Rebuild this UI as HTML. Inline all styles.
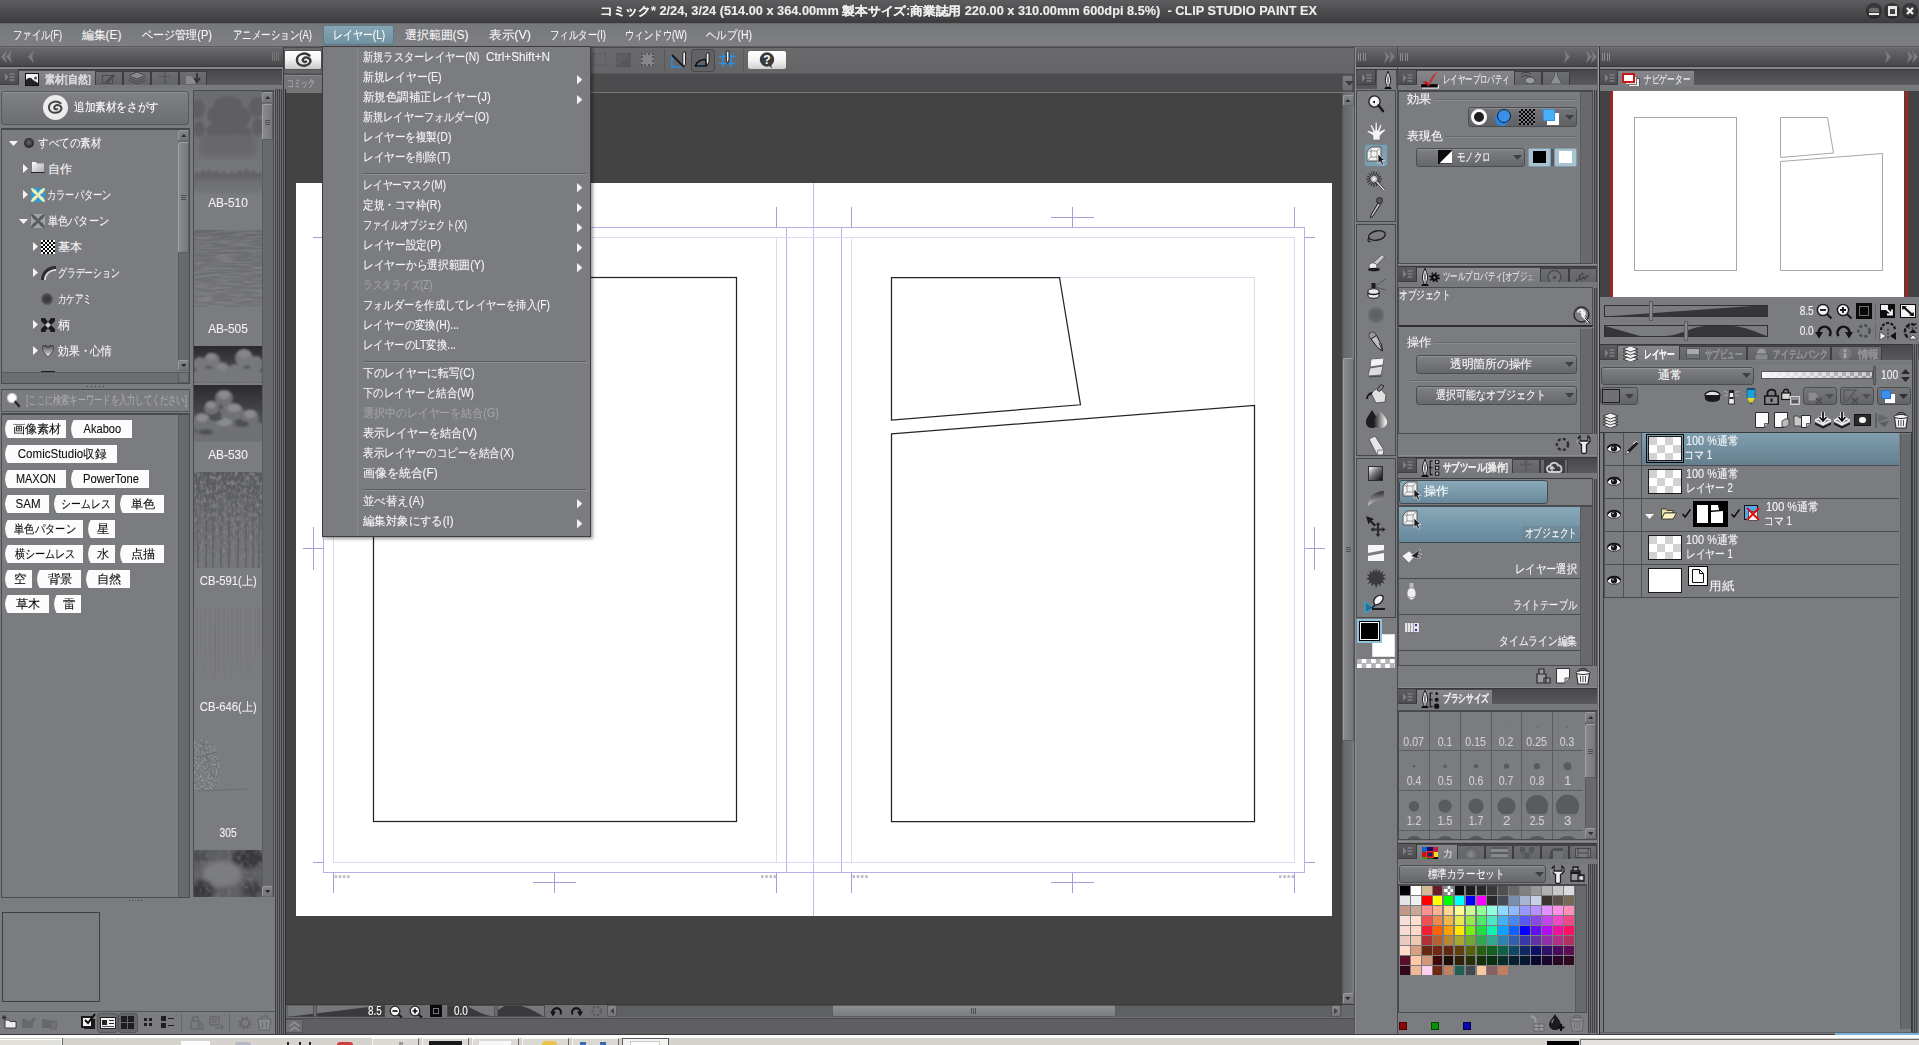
<!DOCTYPE html>
<html lang="ja"><head><meta charset="utf-8"><title>CLIP STUDIO PAINT EX</title><style>
html,body{margin:0;padding:0}
body{width:1919px;height:1045px;overflow:hidden;position:relative;background:#7b7c80;font-family:"Liberation Sans",sans-serif;font-size:12px;color:#f4f4f4}
div{position:absolute;box-sizing:border-box}
.t{white-space:nowrap;overflow:visible;-webkit-text-stroke:0.1px currentColor}
</style></head><body>
<div style="left:0px;top:0px;width:1919px;height:23px;background:linear-gradient(#5d5d60,#3c3c3e);"></div>
<div class="t" style="left:599.5px;top:3px;height:16px;line-height:16px;font-size:12px;color:#eeeeee;font-weight:bold;"><span style="display:inline-block;transform:scaleX(1.0620);transform-origin:0 50%">コミック* 2/24, 3/24 (514.00 x 364.00mm 製本サイズ:商業誌用 220.00 x 310.00mm 600dpi 8.5%)&nbsp; - CLIP STUDIO PAINT EX</span></div>
<div style="left:1866px;top:3px;width:16px;height:16px;background:radial-gradient(circle at 50% 40%,#4a4a4c,#1e1e20);border-radius:8px;"></div>
<div style="left:1884px;top:3px;width:16px;height:16px;background:radial-gradient(circle at 50% 40%,#4a4a4c,#1e1e20);border-radius:8px;"></div>
<div style="left:1902px;top:3px;width:16px;height:16px;background:radial-gradient(circle at 50% 40%,#4a4a4c,#1e1e20);border-radius:8px;"></div>
<div style="left:1869px;top:13px;width:10px;height:2px;background:#e8e8e8;"></div>
<div style="left:1869px;top:8px;width:10px;height:4px;background:#6a6a6c;border-radius:2px 2px 0 0;"></div>
<div style="left:1888px;top:6px;width:9px;height:10px;border:2px solid #e8e8e8;border-top-width:3px;"></div>
<svg style="position:absolute;left:1906px;top:7px;" width="8" height="8" viewBox="0 0 8 8"><path d="M1 1L7 7M7 1L1 7" stroke="#f0f0f0" stroke-width="2.2"/></svg>
<div style="left:0px;top:23px;width:1919px;height:24px;background:linear-gradient(#77787c,#7e7f83);border-top:1px solid #6a6a6d;border-bottom:1px solid #5a5a5d;"></div>
<div class="t" style="left:12.5px;top:27px;height:16px;line-height:16px;font-size:12px;color:#f6f6f6;"><span style="display:inline-block;transform:scaleX(0.7737);transform-origin:0 50%">ファイル(F)</span></div>
<div class="t" style="left:81.5px;top:27px;height:16px;line-height:16px;font-size:12px;color:#f6f6f6;"><span style="display:inline-block;transform:scaleX(1.0000);transform-origin:0 50%">編集(E)</span></div>
<div class="t" style="left:141.5px;top:27px;height:16px;line-height:16px;font-size:12px;color:#f6f6f6;"><span style="display:inline-block;transform:scaleX(0.9211);transform-origin:0 50%">ページ管理(P)</span></div>
<div class="t" style="left:232.5px;top:27px;height:16px;line-height:16px;font-size:12px;color:#f6f6f6;"><span style="display:inline-block;transform:scaleX(0.7900);transform-origin:0 50%">アニメーション(A)</span></div>
<div class="t" style="left:404.5px;top:27px;height:16px;line-height:16px;font-size:12px;color:#f6f6f6;"><span style="display:inline-block;transform:scaleX(1.0000);transform-origin:0 50%">選択範囲(S)</span></div>
<div class="t" style="left:489.0px;top:27px;height:16px;line-height:16px;font-size:12px;color:#f6f6f6;"><span style="display:inline-block;transform:scaleX(1.0500);transform-origin:0 50%">表示(V)</span></div>
<div class="t" style="left:550.0px;top:27px;height:16px;line-height:16px;font-size:12px;color:#f6f6f6;"><span style="display:inline-block;transform:scaleX(0.7851);transform-origin:0 50%">フィルター(I)</span></div>
<div class="t" style="left:625.0px;top:27px;height:16px;line-height:16px;font-size:12px;color:#f6f6f6;"><span style="display:inline-block;transform:scaleX(0.7816);transform-origin:0 50%">ウィンドウ(W)</span></div>
<div class="t" style="left:706.0px;top:27px;height:16px;line-height:16px;font-size:12px;color:#f6f6f6;"><span style="display:inline-block;transform:scaleX(0.8733);transform-origin:0 50%">ヘルプ(H)</span></div>
<div style="left:323px;top:25px;width:71px;height:20px;background:linear-gradient(#86a6b6,#6f909f);border:1px solid #5d7a88;border-radius:2px;"></div>
<div class="t" style="left:332.5px;top:27px;height:16px;line-height:16px;font-size:12px;color:#ffffff;"><span style="display:inline-block;transform:scaleX(0.8297);transform-origin:0 50%">レイヤー(L)</span></div>
<div style="left:284px;top:47px;width:1071px;height:26px;background:linear-gradient(#6a6a6d,#656568);border-top:1px solid #4a4a4c;"></div>
<div style="left:284px;top:50px;width:38px;height:20px;background:linear-gradient(#ffffff 0%,#f4f4f4 45%,#c8c8c8 100%);border:1px solid #555;border-radius:2px;"></div>
<svg style="position:absolute;left:295px;top:52px;" width="18" height="16" viewBox="0 0 18 16"><path d="M14.5 3.5 C9 -1 1.5 3 2 8.5 C2.5 14.5 12 15.5 15 10.5 C17 6.5 11 4 8.5 6.5 C6.5 8.5 9 11 11 9.5" fill="none" stroke="#3a3a3c" stroke-width="2.4" stroke-linecap="round"/></svg>
<div style="left:593px;top:53px;width:13px;height:13px;border:1px dashed #5a5a5d;"></div>
<div style="left:616px;top:53px;width:15px;height:14px;background:#5f5f62;border:1px dashed #58585b;"></div>
<svg style="position:absolute;left:616px;top:53px;" width="15" height="14" viewBox="0 0 15 14"><path d="M0 14 L15 0 L15 14 Z" fill="#58585b"/></svg>
<div style="left:641px;top:53px;width:13px;height:13px;background:#87878a;border:2px dotted #55555a;"></div>
<div style="left:664px;top:49px;width:1px;height:22px;background:#58585b;"></div>
<svg style="position:absolute;left:670px;top:50px;" width="18" height="20" viewBox="0 0 18 20"><path d="M2 17 L2 5 L14 17 Z" fill="none" stroke="#1e90e0" stroke-width="0"/><path d="M2 6 L2 17 L14 17" fill="none" stroke="#2a8fe0" stroke-width="1.6"/><path d="M2 5 L14 17" stroke="#18181a" stroke-width="1.8"/><path d="M14 2 L15.5 2 L15.5 14 L14 17 L12.8 14 L12.8 3 Z" fill="#f0f0f0" stroke="#222" stroke-width="1"/></svg>
<div style="left:691px;top:49px;width:24px;height:23px;background:#626265;border:1px solid #4a4a4d;border-radius:3px;"></div>
<svg style="position:absolute;left:694px;top:51px;" width="18" height="19" viewBox="0 0 18 19"><path d="M2 15 L13 15" stroke="#2a8fe0" stroke-width="1.6"/><path d="M1.5 15 C3 10 6 8.5 12 8.5 L12 15 Z" fill="none" stroke="#101012" stroke-width="1.6"/><path d="M13.5 2 L15 2 L15 11 L13.6 14.5 L12.2 11 L12.2 3 Z" fill="#f0f0f0" stroke="#222" stroke-width="1"/></svg>
<svg style="position:absolute;left:718px;top:50px;" width="18" height="20" viewBox="0 0 18 20"><path d="M1 6.5H17M1 13.5H17M5 3V17M13 3V17" stroke="#2a8fe0" stroke-width="1.5"/><path d="M8.5 1 L11 1 L11 10 L9.7 13.5 L8.3 10 L8.3 1 Z" fill="#f0f0f0" stroke="#222" stroke-width="1"/></svg>
<div style="left:743px;top:49px;width:1px;height:22px;background:#58585b;"></div>
<div style="left:747px;top:50px;width:40px;height:20px;background:linear-gradient(#ffffff 0%,#f4f4f4 50%,#cfcfcf 100%);border:1px solid #666;border-radius:3px;"></div>
<svg style="position:absolute;left:758px;top:52px;" width="18" height="17" viewBox="0 0 18 17"><circle cx="9" cy="7.5" r="7.2" fill="#3a3a3c"/><path d="M10 13 L14 16.5 L13 12 Z" fill="#3a3a3c"/><text x="9" y="12" font-size="12" font-weight="bold" fill="#fff" text-anchor="middle" font-family="Liberation Sans">?</text></svg>
<div style="left:284px;top:73px;width:1071px;height:19px;background:#4c4c4e;border-top:1px solid #5a5a5c;"></div>
<div style="left:284px;top:75px;width:38px;height:17px;background:#757578;border-top:1px solid #88888b;"></div>
<div class="t" style="left:287.0px;top:76px;height:14px;line-height:14px;font-size:11px;color:#b0b0b3;"><span style="display:inline-block;transform:scaleX(0.6364);transform-origin:0 50%">コミック</span></div>
<div style="left:1342px;top:75px;width:11px;height:16px;background:linear-gradient(#7d7e81,#6d6e71);border:1px solid #5a5a5d;border-radius:2px;"></div>
<svg style="position:absolute;left:1344.5px;top:81px;" width="9" height="5" viewBox="0 0 9 5"><path d="M0 0 L9 0 L4.5 5 Z" fill="#3e3e40"/></svg>
<div style="left:284px;top:92px;width:1071px;height:1px;background:#77787b;"></div>
<div style="left:284px;top:93px;width:1071px;height:911px;background:#434343;"></div>
<div style="left:284px;top:93px;width:1px;height:911px;background:#2e2e30;"></div>
<div style="left:296px;top:183px;width:1035.5px;height:733px;background:#ffffff;"></div>
<svg style="position:absolute;left:0px;top:0px;shape-rendering:auto;" width="1400" height="1000" viewBox="0 0 1400 1000"><rect x="813" y="183" width="1" height="733" fill="#c0beee"/><rect x="323" y="227" width="982" height="1" fill="#b4b1e8"/><rect x="323" y="872" width="982" height="1" fill="#b4b1e8"/><rect x="323" y="227" width="1" height="646" fill="#b4b1e8"/><rect x="1304" y="227" width="1" height="646" fill="#b4b1e8"/><rect x="786" y="227" width="1" height="646" fill="#b8b5e6"/><rect x="841" y="227" width="1" height="646" fill="#b8b5e6"/><rect x="333" y="237" width="962" height="1" fill="#dddbf4"/><rect x="333" y="862" width="962" height="1" fill="#dddbf4"/><rect x="333" y="237" width="1" height="626" fill="#dddbf4"/><rect x="1294" y="237" width="1" height="626" fill="#dddbf4"/><rect x="776" y="237" width="1" height="626" fill="#dddbf4"/><rect x="851" y="237" width="1" height="626" fill="#dddbf4"/><rect x="333" y="207" width="1" height="20" fill="#a3a0d8"/><rect x="333" y="873" width="1" height="20" fill="#a3a0d8"/><rect x="776" y="207" width="1" height="20" fill="#a3a0d8"/><rect x="776" y="873" width="1" height="20" fill="#a3a0d8"/><rect x="851" y="207" width="1" height="20" fill="#a3a0d8"/><rect x="851" y="873" width="1" height="20" fill="#a3a0d8"/><rect x="1294" y="207" width="1" height="20" fill="#a3a0d8"/><rect x="1294" y="873" width="1" height="20" fill="#a3a0d8"/><rect x="313" y="237" width="10" height="1" fill="#a3a0d8"/><rect x="1305" y="237" width="10" height="1" fill="#a3a0d8"/><rect x="313" y="862" width="10" height="1" fill="#a3a0d8"/><rect x="1305" y="862" width="10" height="1" fill="#a3a0d8"/><rect x="554" y="207" width="1" height="20" fill="#a3a0d8"/><rect x="533" y="217" width="43" height="1" fill="#a3a0d8"/><rect x="554" y="873" width="1" height="20" fill="#a3a0d8"/><rect x="533" y="882" width="43" height="1" fill="#a3a0d8"/><rect x="1072" y="207" width="1" height="20" fill="#a3a0d8"/><rect x="1051" y="217" width="43" height="1" fill="#a3a0d8"/><rect x="1072" y="873" width="1" height="20" fill="#a3a0d8"/><rect x="1051" y="882" width="43" height="1" fill="#a3a0d8"/><rect x="303" y="548" width="20" height="1" fill="#a3a0d8"/><rect x="313" y="527" width="1" height="43" fill="#a3a0d8"/><rect x="1305" y="548" width="20" height="1" fill="#a3a0d8"/><rect x="1314" y="527" width="1" height="43" fill="#a3a0d8"/><rect x="891" y="277" width="364" height="1" fill="#dddbf4"/><rect x="1254" y="277" width="1" height="129" fill="#dddbf4"/><rect x="334.5" y="875.2" width="2.6" height="2.8" fill="#a8a8ae" opacity="0.75"/><rect x="338.7" y="875.2" width="2.6" height="2.8" fill="#a8a8ae" opacity="0.75"/><rect x="342.9" y="875.2" width="2.6" height="2.8" fill="#a8a8ae" opacity="0.75"/><rect x="347.1" y="875.2" width="2.6" height="2.8" fill="#a8a8ae" opacity="0.75"/><rect x="852.5" y="875.2" width="2.6" height="2.8" fill="#a8a8ae" opacity="0.75"/><rect x="856.7" y="875.2" width="2.6" height="2.8" fill="#a8a8ae" opacity="0.75"/><rect x="860.9" y="875.2" width="2.6" height="2.8" fill="#a8a8ae" opacity="0.75"/><rect x="865.1" y="875.2" width="2.6" height="2.8" fill="#a8a8ae" opacity="0.75"/><rect x="761.0" y="875.2" width="2.6" height="2.8" fill="#a8a8ae" opacity="0.75"/><rect x="765.2" y="875.2" width="2.6" height="2.8" fill="#a8a8ae" opacity="0.75"/><rect x="769.4" y="875.2" width="2.6" height="2.8" fill="#a8a8ae" opacity="0.75"/><rect x="773.6" y="875.2" width="2.6" height="2.8" fill="#a8a8ae" opacity="0.75"/><rect x="1279.0" y="875.2" width="2.6" height="2.8" fill="#a8a8ae" opacity="0.75"/><rect x="1283.2" y="875.2" width="2.6" height="2.8" fill="#a8a8ae" opacity="0.75"/><rect x="1287.4" y="875.2" width="2.6" height="2.8" fill="#a8a8ae" opacity="0.75"/><rect x="1291.6" y="875.2" width="2.6" height="2.8" fill="#a8a8ae" opacity="0.75"/><rect x="373.5" y="277.5" width="363" height="544" fill="none" stroke="#242428" stroke-width="1.25"/><path d="M891.5 277.5 L1059.5 277.5 L1080.5 404.8 L891.5 420 Z" fill="none" stroke="#242428" stroke-width="1.25"/><path d="M891.5 433.8 L1254.5 405.4 L1254.5 821.5 L891.5 821.5 Z" fill="none" stroke="#242428" stroke-width="1.25"/></svg>
<div style="left:1342px;top:93px;width:12px;height:911px;background:linear-gradient(90deg,#58585b,#696a6d 25%,#6e6f72 75%,#7e7f83);"></div>
<div style="left:1342.5px;top:95px;width:11px;height:11px;background:linear-gradient(#838488,#747578);border:1px solid #9a9b9e;border-right-color:#68696c;border-bottom-color:#68696c;border-radius:2px;"></div>
<svg style="position:absolute;left:1345.2px;top:99px;" width="5.6" height="3.2" viewBox="0 0 5.6 3.2"><path d="M0 3.2 L2.8 0 L5.6 3.2 Z" fill="#2e2e31"/></svg>
<div style="left:1342.5px;top:993px;width:11px;height:11px;background:linear-gradient(#838488,#747578);border:1px solid #9a9b9e;border-right-color:#68696c;border-bottom-color:#68696c;border-radius:2px;"></div>
<svg style="position:absolute;left:1345.2px;top:997px;" width="5.6" height="3.2" viewBox="0 0 5.6 3.2"><path d="M0 0 L5.6 0 L2.8 3.2 Z" fill="#2e2e31"/></svg>
<div style="left:1342.5px;top:358px;width:11px;height:383px;background:linear-gradient(90deg,#898a8e,#77787c);border:1px solid #5c5d60;border-left-color:#a0a1a4;border-top-color:#a0a1a4;border-radius:2px;"></div>
<div style="left:1345.5px;top:547px;width:5px;height:1px;background:#4f5053;"></div>
<div style="left:1345.5px;top:549px;width:5px;height:1px;background:#4f5053;"></div>
<div style="left:1345.5px;top:551px;width:5px;height:1px;background:#4f5053;"></div>
<div style="left:284px;top:1004px;width:1071px;height:14px;background:#707174;border-top:1px solid #3a3a3c;"></div>
<svg style="position:absolute;left:287px;top:1005px;" width="98" height="12" viewBox="0 0 98 12"><rect width="98" height="12" fill="#77787b"/><path d="M0 12 L98 0 L98 12 Z" fill="#3a3a3c"/><rect x="0" y="0" width="98" height="12" fill="none" stroke="#4c4c4f" stroke-width="1"/></svg>
<div style="left:313px;top:1005px;width:4px;height:12px;background:#6a6b6e;border:1px solid #515255;"></div>
<div class="t" style="left:359px;top:1004px;height:14px;line-height:14px;font-size:12px;color:#ffffff;width:23px;text-align:right;"><span style="display:inline-block;transform:scaleX(0.8150);transform-origin:100% 50%">8.5</span></div>
<svg style="position:absolute;left:389.0px;top:1005px;" width="14" height="13" viewBox="0 0 14 13"><path d="M9.5 9.5 L13 12.5" stroke="#1a1a1c" stroke-width="2.2"/><circle cx="6" cy="6" r="4.8" fill="#f4f4f4" stroke="#222" stroke-width="1.3"/><path d="M3.5 6H8.5" stroke="#111" stroke-width="1.7"/></svg>
<svg style="position:absolute;left:409.0px;top:1005px;" width="14" height="13" viewBox="0 0 14 13"><path d="M9.5 9.5 L13 12.5" stroke="#1a1a1c" stroke-width="2.2"/><circle cx="6" cy="6" r="4.8" fill="#f4f4f4" stroke="#222" stroke-width="1.3"/><path d="M3.5 6H8.5M6 3.5V8.5" stroke="#111" stroke-width="1.7"/></svg>
<div style="left:430px;top:1005px;width:12px;height:12px;background:#0a0a0a;"></div>
<div style="left:433px;top:1008px;width:6px;height:6px;border:1px solid #77787b;"></div>
<svg style="position:absolute;left:447px;top:1005px;" width="98" height="12" viewBox="0 0 98 12"><rect width="98" height="12" fill="#3a3a3c"/><path d="M19 0 H48 V11.5 C40 11 30 7 19 0Z" fill="#77787b"/><path d="M51 0 H59.5 L51 5Z" fill="#77787b"/><path d="M70 0 H98 V12 C90 8 82 2 70 0Z" fill="#77787b"/><rect x="0.5" y="0.5" width="97" height="11" fill="none" stroke="#4c4c4f"/></svg>
<div style="left:494px;top:1005px;width:4px;height:12px;background:#6a6b6e;border:1px solid #515255;"></div>
<div class="t" style="left:453.5px;top:1004px;height:14px;line-height:14px;font-size:12px;color:#ffffff;"><span style="display:inline-block;transform:scaleX(0.8270);transform-origin:0 50%">0.0</span></div>
<svg style="position:absolute;left:550.0px;top:1005px;" width="13" height="12" viewBox="0 0 13 12"><g transform="translate(6.5 0) scale(1 1) translate(-6.5 0)"><path d="M3 9.5 A4.3 4.3 0 1 1 10.5 9.5" fill="none" stroke="#141414" stroke-width="2.1"/><path d="M0 6.5 L6 6.5 L3 11.5 Z" fill="#141414"/></g></svg>
<svg style="position:absolute;left:569.5px;top:1005px;" width="13" height="12" viewBox="0 0 13 12"><g transform="translate(6.5 0) scale(-1 1) translate(-6.5 0)"><path d="M3 9.5 A4.3 4.3 0 1 1 10.5 9.5" fill="none" stroke="#141414" stroke-width="2.1"/><path d="M0 6.5 L6 6.5 L3 11.5 Z" fill="#141414"/></g></svg>
<svg style="position:absolute;left:590px;top:1005px;" width="13" height="12" viewBox="0 0 13 12"><circle cx="6.5" cy="6" r="4.3" fill="none" stroke="#5a5a5d" stroke-width="2" stroke-dasharray="2.4 1.6"/></svg>
<div style="left:607px;top:1005px;width:735px;height:12px;background:#5f6063;border-top:1px solid #4c4c4f;"></div>
<div style="left:607px;top:1005px;width:10px;height:12px;background:linear-gradient(#88898c,#747578);border:1px solid #58585b;border-radius:2px;"></div>
<svg style="position:absolute;left:610px;top:1008px;" width="4" height="6" viewBox="0 0 4 6"><path d="M4 0 L0 3 L4 6 Z" fill="#444"/></svg>
<div style="left:1331px;top:1005px;width:10px;height:12px;background:linear-gradient(#88898c,#747578);border:1px solid #58585b;border-radius:2px;"></div>
<svg style="position:absolute;left:1334px;top:1008px;" width="4" height="6" viewBox="0 0 4 6"><path d="M0 0 L4 3 L0 6 Z" fill="#444"/></svg>
<div style="left:832px;top:1005px;width:284px;height:12px;background:linear-gradient(#8e8f92,#7a7b7e);border:1px solid #5c5d60;border-radius:2px;"></div>
<div style="left:971px;top:1008px;width:1px;height:6px;background:#4f5053;"></div>
<div style="left:973px;top:1008px;width:1px;height:6px;background:#4f5053;"></div>
<div style="left:975px;top:1008px;width:1px;height:6px;background:#4f5053;"></div>
<div style="left:1342px;top:1005px;width:12px;height:12px;background:#68696c;"></div>
<div style="left:284px;top:1018px;width:1071px;height:16px;background:#5f5f62;border-top:1px solid #4c4c4f;"></div>
<div style="left:285px;top:1019px;width:18px;height:14px;background:#6e6e71;border:1px solid #555558;"></div>
<svg style="position:absolute;left:288px;top:1021px;" width="12" height="10" viewBox="0 0 12 10"><path d="M0 5.5 L6.5 0 L13 5.5 L10.5 5.5 L6.5 2.5 L2.5 5.5Z M0 10.5 L6.5 5 L13 10.5 L10.5 10.5 L6.5 7.5 L2.5 10.5Z" fill="#8e8f92"/></svg>
<div style="left:1354px;top:47px;width:1px;height:987px;background:#505154;"></div>
<div style="left:1355px;top:47px;width:1px;height:987px;background:#8e8f93;"></div>
<div style="left:0px;top:47px;width:283px;height:20px;background:linear-gradient(#69696c,#474749);border-top:1px solid #727275;border-bottom:1px solid #39393b;"></div>
<svg style="position:absolute;left:1px;top:50.4px;" width="11" height="13.4" viewBox="0 0 11 13.4"><path d="M6 0 L0 6.7 L6 13.4 L4.2 6.7 Z" fill="#7a7b7e"/><path d="M11 0 L5 6.7 L11 13.4 L9.2 6.7 Z" fill="#7a7b7e"/></svg>
<svg style="position:absolute;left:28px;top:50.4px;" width="6" height="13.4" viewBox="0 0 6 13.4"><path d="M6 0 L0 6.7 L6 13.4 L4.2 6.7 Z" fill="#7a7b7e"/></svg>
<div style="left:272px;top:52px;width:1px;height:9px;background:#77787b;"></div>
<div style="left:274px;top:52px;width:1px;height:9px;background:#77787b;"></div>
<div style="left:276px;top:52px;width:1px;height:9px;background:#77787b;"></div>
<div style="left:278px;top:52px;width:1px;height:9px;background:#77787b;"></div>
<div style="left:0px;top:67px;width:283px;height:2px;background:#85868a;"></div>
<div style="left:0px;top:69px;width:282px;height:16px;background:linear-gradient(#47474a,#5a5a5d);border-top:1px solid #38383a;"></div>
<div style="left:0px;top:69px;width:19px;height:16px;background:linear-gradient(#5c5c5f,#4e4e51);border-right:1px solid #3c3c3e;border-bottom:1px solid #404043;"></div>
<svg style="position:absolute;left:4.5px;top:72.5px;" width="10" height="8" viewBox="0 0 10 8"><path d="M0 0 L3.4 4 L0 8 Z" fill="#7f8084"/><path d="M4.5 1h5M4.5 4h5M4.5 7h5" stroke="#7f8084" stroke-width="1.4"/></svg>
<div style="left:19px;top:70px;width:76px;height:18px;background:linear-gradient(#86878b,#7b7c80 60%);border-top:1px solid #4a4a4d;"></div>
<div style="left:25px;top:73px;width:14px;height:13px;background:#f2f2f2;border:1px solid #111;"></div>
<svg style="position:absolute;left:26px;top:74px;" width="12" height="11" viewBox="0 0 12 11"><path d="M0 11 L0 6 C3 3 5 3 7 6 L12 9 L12 11Z" fill="#222"/><circle cx="9.5" cy="4" r="1.5" fill="#555"/></svg>
<div class="t" style="left:45.0px;top:72px;height:15px;line-height:15px;font-size:11px;color:#d8d8da;font-weight:bold;"><span style="display:inline-block;transform:scaleX(0.8962);transform-origin:0 50%">素材[自然]</span></div>
<div style="left:95px;top:71px;width:28px;height:14px;background:linear-gradient(#6d6e71,#636467);border:1px solid #3e3e41;border-bottom:none;"></div>
<div style="left:123px;top:71px;width:28px;height:14px;background:linear-gradient(#6d6e71,#636467);border:1px solid #3e3e41;border-bottom:none;"></div>
<div style="left:151px;top:71px;width:28px;height:14px;background:linear-gradient(#6d6e71,#636467);border:1px solid #3e3e41;border-bottom:none;"></div>
<div style="left:179px;top:71px;width:28px;height:14px;background:linear-gradient(#6d6e71,#636467);border:1px solid #3e3e41;border-bottom:none;"></div>
<svg style="position:absolute;left:102px;top:73px;" width="14" height="11" viewBox="0 0 14 11"><rect x="0.5" y="2.5" width="10" height="8" fill="none" stroke="#4c4c4f"/><path d="M3 9 L11 1 L13 3 L5 11Z" fill="#4c4c4f"/></svg>
<svg style="position:absolute;left:129px;top:72px;" width="16" height="12" viewBox="0 0 16 12"><path d="M8 0 L16 3.5 L8 7 L0 3.5Z" fill="#8a8b8e" stroke="#4c4c4f"/><path d="M0 6 L8 9.5 L16 6M0 8.5 L8 12 L16 8.5" fill="none" stroke="#4c4c4f"/></svg>
<svg style="position:absolute;left:159px;top:72px;" width="12" height="12" viewBox="0 0 12 12"><circle cx="6" cy="1.8" r="1.6" fill="#5a5a5d"/><path d="M0 4.5H12M6 3V12" stroke="#5a5a5d" stroke-width="2"/></svg>
<svg style="position:absolute;left:186px;top:73px;" width="15" height="11" viewBox="0 0 15 11"><path d="M0 3 L5 3 L6 4.5 L9 4.5 L9 11 L0 11Z" fill="#88898c"/><path d="M11 0V7M8 5 L11 9 L14 5" stroke="#333" stroke-width="1.8" fill="none"/></svg>
<div style="left:0px;top:86px;width:283px;height:3px;background:#77787c;"></div>
<div style="left:0px;top:89px;width:275px;height:945px;background:#7b7c80;"></div>
<div style="left:1px;top:91px;width:188px;height:34px;background:linear-gradient(#808185,#6d6e72);border:1px solid #56575a;border-radius:3px;box-shadow:inset 0 1px 0 #919296;"></div>
<div style="left:43px;top:95px;width:25px;height:25px;background:#ececec;border-radius:13px;"></div>
<svg style="position:absolute;left:47px;top:100px;" width="17" height="15" viewBox="0 0 17 15"><path d="M13.5 3.3 C8.5 -1 1.5 3 2 8 C2.5 13.5 11 14.5 14 10 C16 6 10.5 3.8 8 6 C6 8 8.5 10.3 10.3 9" fill="none" stroke="#444" stroke-width="2" stroke-linecap="round"/></svg>
<div class="t" style="left:73.5px;top:100px;height:15px;line-height:15px;font-size:12px;color:#ffffff;"><span style="display:inline-block;transform:scaleX(0.8854);transform-origin:0 50%">追加素材をさがす</span></div>
<div style="left:1px;top:128px;width:189px;height:256px;background:#7b7c80;border:1px solid #4b4c4f;border-top:2px solid #48494c;"></div>
<svg style="position:absolute;left:9px;top:141px;" width="9" height="5" viewBox="0 0 9 5"><path d="M0 0 L9 0 L4.5 5Z" fill="#f4f4f4"/></svg>
<div style="left:24px;top:138px;width:10px;height:10px;background:radial-gradient(circle at 50% 45%,#6a6a6c 0,#2c2c2e 60%,#1a1a1c 100%);border-radius:5px;"></div>
<div class="t" style="left:37.5px;top:135px;height:16px;line-height:16px;font-size:12px;color:#f6f6f6;"><span style="display:inline-block;transform:scaleX(0.8750);transform-origin:0 50%">すべての素材</span></div>
<svg style="position:absolute;left:23px;top:164px;" width="5" height="9" viewBox="0 0 5 9"><path d="M0 0 L5 4.5 L0 9Z" fill="#f4f4f4"/></svg>
<svg style="position:absolute;left:31px;top:162px;" width="14" height="11" viewBox="0 0 14 11"><defs><linearGradient id="fg" x1="0" y1="0" x2="1" y2="1"><stop offset="0" stop-color="#fff"/><stop offset="1" stop-color="#aaa"/></linearGradient></defs><path d="M1 0 L5 0 L6 1.5 L13 1.5 L13 10 L1 10Z" fill="url(#fg)"/><path d="M0 10.5H13.5" stroke="#222"/></svg>
<div class="t" style="left:47.5px;top:161px;height:16px;line-height:16px;font-size:12px;color:#f6f6f6;"><span style="display:inline-block;transform:scaleX(1.0000);transform-origin:0 50%">自作</span></div>
<svg style="position:absolute;left:23px;top:190px;" width="5" height="9" viewBox="0 0 5 9"><path d="M0 0 L5 4.5 L0 9Z" fill="#f4f4f4"/></svg>
<svg style="position:absolute;left:31px;top:188px;" width="14" height="14" viewBox="0 0 14 14"><rect width="14" height="14" fill="#2f9bd2"/><path d="M7 7 C5 3 3 1.5 0.8 0.8 C1.5 3 3 5 7 7 C9 3 11 1.5 13.2 0.8 C12.5 3 11 5 7 7 C11 9 12.5 11 13.2 13.2 C11 12.5 9 11 7 7 C5 11 3 12.5 0.8 13.2 C1.5 11 3 9 7 7Z" fill="#f0efb4" stroke="#f0efb4" stroke-width="1.6" stroke-linejoin="round"/></svg>
<div class="t" style="left:47.0px;top:187px;height:16px;line-height:16px;font-size:12px;color:#f6f6f6;"><span style="display:inline-block;transform:scaleX(0.7679);transform-origin:0 50%">カラーパターン</span></div>
<svg style="position:absolute;left:19px;top:219px;" width="9" height="5" viewBox="0 0 9 5"><path d="M0 0 L9 0 L4.5 5Z" fill="#f4f4f4"/></svg>
<svg style="position:absolute;left:31px;top:214px;" width="14" height="14" viewBox="0 0 14 14"><rect width="14" height="14" fill="#a2a3a6"/><path d="M7 7 C5 3 3 1.5 0.8 0.8 C1.5 3 3 5 7 7 C9 3 11 1.5 13.2 0.8 C12.5 3 11 5 7 7 C11 9 12.5 11 13.2 13.2 C11 12.5 9 11 7 7 C5 11 3 12.5 0.8 13.2 C1.5 11 3 9 7 7Z" fill="#5a5b5e" stroke="#5a5b5e" stroke-width="1.6" stroke-linejoin="round"/></svg>
<div class="t" style="left:47.5px;top:213px;height:16px;line-height:16px;font-size:12px;color:#f6f6f6;"><span style="display:inline-block;transform:scaleX(0.8472);transform-origin:0 50%">単色パターン</span></div>
<svg style="position:absolute;left:33px;top:242px;" width="5" height="9" viewBox="0 0 5 9"><path d="M0 0 L5 4.5 L0 9Z" fill="#f4f4f4"/></svg>
<div style="left:41px;top:240px;width:14px;height:14px;background:conic-gradient(#000 25%,#fff 0 50%,#000 0 75%,#fff 0) 0 0/4px 4px;"></div>
<div class="t" style="left:57.5px;top:239px;height:16px;line-height:16px;font-size:12px;color:#f6f6f6;"><span style="display:inline-block;transform:scaleX(1.0000);transform-origin:0 50%">基本</span></div>
<svg style="position:absolute;left:33px;top:268px;" width="5" height="9" viewBox="0 0 5 9"><path d="M0 0 L5 4.5 L0 9Z" fill="#f4f4f4"/></svg>
<svg style="position:absolute;left:41px;top:266px;" width="15" height="14" viewBox="0 0 15 14"><path d="M0 14 C0 6 6 0 15 0 L15 5 C9 5 5 9 5 14Z" fill="#2e2e30"/><path d="M3 14 C3 8 8 3 15 3 L15 5 C9 5 5 9 5 14Z" fill="#d8d8d8"/></svg>
<div class="t" style="left:57.5px;top:265px;height:16px;line-height:16px;font-size:12px;color:#f6f6f6;"><span style="display:inline-block;transform:scaleX(0.7321);transform-origin:0 50%">グラデーション</span></div>
<div style="left:41px;top:293px;width:12px;height:12px;background:radial-gradient(circle,#333 0,#444 45%,rgba(80,80,84,0.5) 70%,transparent 75%);"></div>
<div class="t" style="left:57.5px;top:291px;height:16px;line-height:16px;font-size:12px;color:#f6f6f6;"><span style="display:inline-block;transform:scaleX(0.7083);transform-origin:0 50%">カケアミ</span></div>
<svg style="position:absolute;left:33px;top:320px;" width="5" height="9" viewBox="0 0 5 9"><path d="M0 0 L5 4.5 L0 9Z" fill="#f4f4f4"/></svg>
<svg style="position:absolute;left:41px;top:318px;" width="14" height="14" viewBox="0 0 14 14"><path d="M0 0 L4 0 L7 4 L10 0 L14 0 L14 3 L10 7 L14 11 L14 14 L10 14 L7 10 L4 14 L0 14 L0 11 L4 7 L0 3Z" fill="#1c1c1e"/><path d="M7 4 L10 7 L7 10 L4 7Z" fill="#c8c8c8"/></svg>
<div class="t" style="left:57.5px;top:317px;height:16px;line-height:16px;font-size:12px;color:#f6f6f6;"><span style="display:inline-block;transform:scaleX(1.0250);transform-origin:0 50%">柄</span></div>
<svg style="position:absolute;left:33px;top:346px;" width="5" height="9" viewBox="0 0 5 9"><path d="M0 0 L5 4.5 L0 9Z" fill="#f4f4f4"/></svg>
<svg style="position:absolute;left:41px;top:345px;" width="14" height="12" viewBox="0 0 14 12"><defs><linearGradient id="hg" x1="0" y1="0" x2="0" y2="1"><stop offset="0" stop-color="#4a4a4c"/><stop offset="1" stop-color="#e8e8e8"/></linearGradient></defs><path d="M7 12 C0 6 0 0 3.8 0 C6 0 7 2 7 3 C7 2 8 0 10.2 0 C14 0 14 6 7 12Z" fill="url(#hg)" stroke="#39393b" stroke-width="0.8"/></svg>
<div class="t" style="left:57.5px;top:343px;height:16px;line-height:16px;font-size:12px;color:#f6f6f6;"><span style="display:inline-block;transform:scaleX(0.9000);transform-origin:0 50%">効果・心情</span></div>
<div style="left:41px;top:371px;width:14px;height:1px;background:#1c1c1e;"></div>
<div style="left:178px;top:130px;width:11px;height:241px;background:#68696c;border-left:1px solid #5a5b5e;"></div>
<div style="left:178px;top:130px;width:11px;height:11px;background:linear-gradient(#838488,#747578);border:1px solid #9a9b9e;border-right-color:#68696c;border-bottom-color:#68696c;border-radius:2px;"></div>
<svg style="position:absolute;left:180.7px;top:134px;" width="5.6" height="3.2" viewBox="0 0 5.6 3.2"><path d="M0 3.2 L2.8 0 L5.6 3.2 Z" fill="#2e2e31"/></svg>
<div style="left:178px;top:360px;width:11px;height:11px;background:linear-gradient(#838488,#747578);border:1px solid #9a9b9e;border-right-color:#68696c;border-bottom-color:#68696c;border-radius:2px;"></div>
<svg style="position:absolute;left:180.7px;top:364px;" width="5.6" height="3.2" viewBox="0 0 5.6 3.2"><path d="M0 0 L5.6 0 L2.8 3.2 Z" fill="#2e2e31"/></svg>
<div style="left:178px;top:142px;width:11px;height:111px;background:linear-gradient(90deg,#898a8e,#77787c);border:1px solid #5c5d60;border-left-color:#a0a1a4;border-top-color:#a0a1a4;border-radius:2px;"></div>
<div style="left:181px;top:195px;width:5px;height:1px;background:#4f5053;"></div>
<div style="left:181px;top:197px;width:5px;height:1px;background:#4f5053;"></div>
<div style="left:181px;top:199px;width:5px;height:1px;background:#4f5053;"></div>
<div style="left:2px;top:372px;width:176px;height:11px;background:#6c6d70;border-top:1px solid #58595c;"></div>
<div style="left:178px;top:372px;width:11px;height:11px;background:#727376;border:1px solid #5a5b5e;"></div>
<div style="left:87px;top:386px;width:1px;height:1px;background:#3e3e41;"></div>
<div style="left:91px;top:386px;width:1px;height:1px;background:#3e3e41;"></div>
<div style="left:95px;top:386px;width:1px;height:1px;background:#3e3e41;"></div>
<div style="left:99px;top:386px;width:1px;height:1px;background:#3e3e41;"></div>
<div style="left:103px;top:386px;width:1px;height:1px;background:#3e3e41;"></div>
<div style="left:1px;top:389px;width:189px;height:23px;background:#7b7c80;border:1px solid #55565a;border-top-color:#4a4b4e;"></div>
<svg style="position:absolute;left:6px;top:392px;" width="15" height="16" viewBox="0 0 15 16"><circle cx="6" cy="6" r="4.6" fill="#fdfdfd" stroke="#c9c9c9" stroke-width="1.2"/><path d="M9.5 10 L13 14" stroke="#2a2a2c" stroke-width="2.6" stroke-linecap="round"/></svg>
<div class="t" style="left:26.0px;top:393px;height:15px;line-height:15px;font-size:12px;color:#a9aaae;"><span style="display:inline-block;transform:scaleX(0.6861);transform-origin:0 50%">[ここに検索キーワードを入力してください]</span></div>
<div style="left:1px;top:413px;width:189px;height:485px;background:#7b7c80;border:1px solid #4b4c4f;border-top:2px solid #48494c;"></div>
<div style="left:178px;top:415px;width:11px;height:482px;background:#68696c;border-left:1px solid #5a5b5e;"></div>
<svg style="position:absolute;left:5px;top:420px;" width="61" height="18" viewBox="0 0 61 18"><path d="M2.6 0 H61 V18 H2.6 L0.8 14 L0 9 L0.8 4Z" fill="#fcfcfc"/></svg>
<div class="t" style="left:7px;top:421px;height:16px;line-height:16px;font-size:12px;color:#0c0c0c;width:59px;text-align:center;"><span style="display:inline-block;transform:scaleX(1.0104);transform-origin:50% 50%">画像素材</span></div>
<svg style="position:absolute;left:71px;top:420px;" width="61" height="18" viewBox="0 0 61 18"><path d="M2.6 0 H61 V18 H2.6 L0.8 14 L0 9 L0.8 4Z" fill="#fcfcfc"/></svg>
<div class="t" style="left:73px;top:421px;height:16px;line-height:16px;font-size:12px;color:#0c0c0c;width:59px;text-align:center;"><span style="display:inline-block;transform:scaleX(0.9213);transform-origin:50% 50%">Akaboo</span></div>
<svg style="position:absolute;left:5px;top:445px;" width="112" height="18" viewBox="0 0 112 18"><path d="M2.6 0 H112 V18 H2.6 L0.8 14 L0 9 L0.8 4Z" fill="#fcfcfc"/></svg>
<div class="t" style="left:7px;top:446px;height:16px;line-height:16px;font-size:12px;color:#0c0c0c;width:110px;text-align:center;"><span style="display:inline-block;transform:scaleX(0.9616);transform-origin:50% 50%">ComicStudio収録</span></div>
<svg style="position:absolute;left:5px;top:470px;" width="61" height="18" viewBox="0 0 61 18"><path d="M2.6 0 H61 V18 H2.6 L0.8 14 L0 9 L0.8 4Z" fill="#fcfcfc"/></svg>
<div class="t" style="left:7px;top:471px;height:16px;line-height:16px;font-size:12px;color:#0c0c0c;width:59px;text-align:center;"><span style="display:inline-block;transform:scaleX(0.9088);transform-origin:50% 50%">MAXON</span></div>
<svg style="position:absolute;left:71px;top:470px;" width="78" height="18" viewBox="0 0 78 18"><path d="M2.6 0 H78 V18 H2.6 L0.8 14 L0 9 L0.8 4Z" fill="#fcfcfc"/></svg>
<div class="t" style="left:73px;top:471px;height:16px;line-height:16px;font-size:12px;color:#0c0c0c;width:76px;text-align:center;"><span style="display:inline-block;transform:scaleX(0.9326);transform-origin:50% 50%">PowerTone</span></div>
<svg style="position:absolute;left:5px;top:495px;" width="44" height="18" viewBox="0 0 44 18"><path d="M2.6 0 H44 V18 H2.6 L0.8 14 L0 9 L0.8 4Z" fill="#fcfcfc"/></svg>
<div class="t" style="left:7px;top:496px;height:16px;line-height:16px;font-size:12px;color:#0c0c0c;width:42px;text-align:center;"><span style="display:inline-block;transform:scaleX(0.9610);transform-origin:50% 50%">SAM</span></div>
<svg style="position:absolute;left:54px;top:495px;" width="61" height="18" viewBox="0 0 61 18"><path d="M2.6 0 H61 V18 H2.6 L0.8 14 L0 9 L0.8 4Z" fill="#fcfcfc"/></svg>
<div class="t" style="left:56px;top:496px;height:16px;line-height:16px;font-size:12px;color:#0c0c0c;width:59px;text-align:center;"><span style="display:inline-block;transform:scaleX(0.8167);transform-origin:50% 50%">シームレス</span></div>
<svg style="position:absolute;left:120px;top:495px;" width="44" height="18" viewBox="0 0 44 18"><path d="M2.6 0 H44 V18 H2.6 L0.8 14 L0 9 L0.8 4Z" fill="#fcfcfc"/></svg>
<div class="t" style="left:122px;top:496px;height:16px;line-height:16px;font-size:12px;color:#0c0c0c;width:42px;text-align:center;"><span style="display:inline-block;transform:scaleX(1.0125);transform-origin:50% 50%">単色</span></div>
<svg style="position:absolute;left:5px;top:520px;" width="78" height="18" viewBox="0 0 78 18"><path d="M2.6 0 H78 V18 H2.6 L0.8 14 L0 9 L0.8 4Z" fill="#fcfcfc"/></svg>
<div class="t" style="left:7px;top:521px;height:16px;line-height:16px;font-size:12px;color:#0c0c0c;width:76px;text-align:center;"><span style="display:inline-block;transform:scaleX(0.8542);transform-origin:50% 50%">単色パターン</span></div>
<svg style="position:absolute;left:88px;top:520px;" width="27" height="18" viewBox="0 0 27 18"><path d="M2.6 0 H27 V18 H2.6 L0.8 14 L0 9 L0.8 4Z" fill="#fcfcfc"/></svg>
<div class="t" style="left:90px;top:521px;height:16px;line-height:16px;font-size:12px;color:#0c0c0c;width:25px;text-align:center;"><span style="display:inline-block;transform:scaleX(1.0250);transform-origin:50% 50%">星</span></div>
<svg style="position:absolute;left:5px;top:545px;" width="78" height="18" viewBox="0 0 78 18"><path d="M2.6 0 H78 V18 H2.6 L0.8 14 L0 9 L0.8 4Z" fill="#fcfcfc"/></svg>
<div class="t" style="left:7px;top:546px;height:16px;line-height:16px;font-size:12px;color:#0c0c0c;width:76px;text-align:center;"><span style="display:inline-block;transform:scaleX(0.8472);transform-origin:50% 50%">横シームレス</span></div>
<svg style="position:absolute;left:88px;top:545px;" width="27" height="18" viewBox="0 0 27 18"><path d="M2.6 0 H27 V18 H2.6 L0.8 14 L0 9 L0.8 4Z" fill="#fcfcfc"/></svg>
<div class="t" style="left:90px;top:546px;height:16px;line-height:16px;font-size:12px;color:#0c0c0c;width:25px;text-align:center;"><span style="display:inline-block;transform:scaleX(1.0250);transform-origin:50% 50%">水</span></div>
<svg style="position:absolute;left:120px;top:545px;" width="44" height="18" viewBox="0 0 44 18"><path d="M2.6 0 H44 V18 H2.6 L0.8 14 L0 9 L0.8 4Z" fill="#fcfcfc"/></svg>
<div class="t" style="left:122px;top:546px;height:16px;line-height:16px;font-size:12px;color:#0c0c0c;width:42px;text-align:center;"><span style="display:inline-block;transform:scaleX(1.0208);transform-origin:50% 50%">点描</span></div>
<svg style="position:absolute;left:5px;top:570px;" width="27" height="18" viewBox="0 0 27 18"><path d="M2.6 0 H27 V18 H2.6 L0.8 14 L0 9 L0.8 4Z" fill="#fcfcfc"/></svg>
<div class="t" style="left:7px;top:571px;height:16px;line-height:16px;font-size:12px;color:#0c0c0c;width:25px;text-align:center;"><span style="display:inline-block;transform:scaleX(1.0250);transform-origin:50% 50%">空</span></div>
<svg style="position:absolute;left:37px;top:570px;" width="44" height="18" viewBox="0 0 44 18"><path d="M2.6 0 H44 V18 H2.6 L0.8 14 L0 9 L0.8 4Z" fill="#fcfcfc"/></svg>
<div class="t" style="left:39px;top:571px;height:16px;line-height:16px;font-size:12px;color:#0c0c0c;width:42px;text-align:center;"><span style="display:inline-block;transform:scaleX(1.0292);transform-origin:50% 50%">背景</span></div>
<svg style="position:absolute;left:86px;top:570px;" width="44" height="18" viewBox="0 0 44 18"><path d="M2.6 0 H44 V18 H2.6 L0.8 14 L0 9 L0.8 4Z" fill="#fcfcfc"/></svg>
<div class="t" style="left:88px;top:571px;height:16px;line-height:16px;font-size:12px;color:#0c0c0c;width:42px;text-align:center;"><span style="display:inline-block;transform:scaleX(1.0292);transform-origin:50% 50%">自然</span></div>
<svg style="position:absolute;left:5px;top:595px;" width="44" height="18" viewBox="0 0 44 18"><path d="M2.6 0 H44 V18 H2.6 L0.8 14 L0 9 L0.8 4Z" fill="#fcfcfc"/></svg>
<div class="t" style="left:7px;top:596px;height:16px;line-height:16px;font-size:12px;color:#0c0c0c;width:42px;text-align:center;"><span style="display:inline-block;transform:scaleX(1.0208);transform-origin:50% 50%">草木</span></div>
<svg style="position:absolute;left:54px;top:595px;" width="27" height="18" viewBox="0 0 27 18"><path d="M2.6 0 H27 V18 H2.6 L0.8 14 L0 9 L0.8 4Z" fill="#fcfcfc"/></svg>
<div class="t" style="left:56px;top:596px;height:16px;line-height:16px;font-size:12px;color:#0c0c0c;width:25px;text-align:center;"><span style="display:inline-block;transform:scaleX(1.0250);transform-origin:50% 50%">雷</span></div>
<div style="left:129px;top:900px;width:1px;height:1px;background:#3e3e41;"></div>
<div style="left:132px;top:900px;width:1px;height:1px;background:#3e3e41;"></div>
<div style="left:135px;top:900px;width:1px;height:1px;background:#3e3e41;"></div>
<div style="left:138px;top:900px;width:1px;height:1px;background:#3e3e41;"></div>
<div style="left:141px;top:900px;width:1px;height:1px;background:#3e3e41;"></div>
<div style="left:2px;top:912px;width:98px;height:90px;background:#7b7c80;border:1px solid #3e3f42;"></div>
<div style="left:0px;top:1011px;width:275px;height:1px;background:#525356;"></div>
<svg style="position:absolute;left:2px;top:1015px;" width="15" height="14" viewBox="0 0 15 14"><path d="M3 5 L7 5 L8 6.5 L14 6.5 L14 13 L3 13Z" fill="#ececec" stroke="#222" stroke-width="0.8"/><path d="M2 0V5M0 2.5H4.5M0.5 0.8L3.8 4.2M3.8 0.8L0.5 4.2" stroke="#222" stroke-width="0.8"/></svg>
<svg style="position:absolute;left:22px;top:1016px;" width="15" height="13" viewBox="0 0 15 13"><path d="M0 3 L4 3 L5 4.5 L11 4.5 L11 12 L0 12Z" fill="#67686b"/><path d="M6 8 L12 1 L14 3 L8 10Z" fill="#67686b" stroke="#6f7073" stroke-width="0.5"/></svg>
<svg style="position:absolute;left:42px;top:1016px;" width="16" height="14" viewBox="0 0 16 14"><path d="M0 3 L4 3 L5 4.5 L10 4.5 L10 12 L0 12Z" fill="#67686b"/><path d="M8 6 H15 L14 14 H9Z M7.5 5H15.5" fill="#707174" stroke="#67686b"/></svg>
<div style="left:81px;top:1016px;width:12px;height:12px;background:#f4f4f4;border:2px solid #1a1a1c;"></div>
<div style="left:84px;top:1027px;width:11px;height:2px;background:#1a1a1c;"></div>
<div style="left:93px;top:1019px;width:2px;height:10px;background:#1a1a1c;"></div>
<svg style="position:absolute;left:83px;top:1013px;" width="13" height="13" viewBox="0 0 13 13"><path d="M2 7 L5 10 L12 1" fill="none" stroke="#0c0c0e" stroke-width="2"/></svg>
<div style="left:97px;top:1013px;width:21px;height:20px;background:#6b6c6f;border:1px solid #56575a;border-radius:3px;"></div>
<div style="left:100px;top:1017px;width:16px;height:12px;background:#f0f0f0;border:1px solid #222;"></div>
<div style="left:102px;top:1020px;width:5px;height:5px;background:#222;"></div>
<div style="left:109px;top:1020px;width:5px;height:1px;background:#222;"></div>
<div style="left:109px;top:1023px;width:5px;height:1px;background:#222;"></div>
<div style="left:102px;top:1026px;width:12px;height:1px;background:#555;"></div>
<div style="left:118px;top:1013px;width:20px;height:20px;background:#66676a;border:1px solid #56575a;border-radius:3px;"></div>
<div style="left:121px;top:1016px;width:6px;height:6px;background:#1e1e20;"></div>
<div style="left:121px;top:1023px;width:6px;height:6px;background:#1e1e20;"></div>
<div style="left:128px;top:1016px;width:6px;height:6px;background:#1e1e20;"></div>
<div style="left:128px;top:1023px;width:6px;height:6px;background:#1e1e20;"></div>
<div style="left:144px;top:1018px;width:3px;height:3px;background:#1e1e20;"></div>
<div style="left:144px;top:1023px;width:3px;height:3px;background:#1e1e20;"></div>
<div style="left:149px;top:1018px;width:3px;height:3px;background:#1e1e20;"></div>
<div style="left:149px;top:1023px;width:3px;height:3px;background:#1e1e20;"></div>
<div style="left:161px;top:1016px;width:5px;height:5px;background:#1e1e20;"></div>
<div style="left:168px;top:1018px;width:6px;height:1px;background:#1e1e20;"></div>
<div style="left:161px;top:1023px;width:5px;height:5px;background:#1e1e20;"></div>
<div style="left:168px;top:1025px;width:6px;height:1px;background:#1e1e20;"></div>
<div style="left:181px;top:1014px;width:1px;height:19px;background:#66676a;"></div>
<svg style="position:absolute;left:189px;top:1015px;" width="15" height="15" viewBox="0 0 15 15"><path d="M4 2 H9 V6 H4Z M2 6 H11 V14 H2Z M9 9H14V14H9Z" fill="none" stroke="#67686b" stroke-width="1.3"/></svg>
<svg style="position:absolute;left:209px;top:1016px;" width="15" height="14" viewBox="0 0 15 14"><path d="M1 1 H10 V9 H1Z M3 3.5H8M3 6H8" fill="none" stroke="#67686b" stroke-width="1.3"/><path d="M6 11 H12 V8 L15 11.5 L12 14 V12.5 H6Z" fill="#67686b"/></svg>
<div style="left:229px;top:1014px;width:1px;height:19px;background:#66676a;"></div>
<svg style="position:absolute;left:237px;top:1015px;" width="16" height="16" viewBox="0 0 16 16"><circle cx="8" cy="8" r="5" fill="none" stroke="#67686b" stroke-width="3" stroke-dasharray="2.2 1.7"/><circle cx="8" cy="8" r="3.8" fill="none" stroke="#67686b" stroke-width="1.5"/></svg>
<svg style="position:absolute;left:257px;top:1015px;" width="15" height="16" viewBox="0 0 15 16"><path d="M1 4 H14 L12.5 15 H2.5Z" fill="#88898c" stroke="#67686b" stroke-width="1.2"/><path d="M4 3.5 C4 0 11 0 11 3.5" fill="none" stroke="#67686b" stroke-width="1.3"/><path d="M5.5 7V13M9.5 7V13" stroke="#67686b"/></svg>
<div style="left:193px;top:90px;width:81px;height:807px;background:#4a4b4e;"></div>
<div style="left:194px;top:91px;width:68px;height:806px;background:#7b7c80;"></div>
<svg style="position:absolute;left:194px;top:91px;" width="68" height="125" viewBox="0 0 68 125"><defs><linearGradient id="f1" x1="0" y1="0" x2="0" y2="1"><stop offset="0" stop-color="#6b6c70"/><stop offset="0.55" stop-color="#737478"/><stop offset="0.82" stop-color="#7b7c80"/></linearGradient><filter id="b1"><feGaussianBlur stdDeviation="1.1"/></filter><filter id="b2"><feGaussianBlur stdDeviation="3"/></filter></defs><rect width="68" height="125" fill="url(#f1)"/><g filter="url(#b1)" fill="#5e5f63"><ellipse cx="34" cy="14" rx="14" ry="9"/><ellipse cx="24" cy="24" rx="11" ry="10"/><ellipse cx="44" cy="26" rx="13" ry="11"/><ellipse cx="33" cy="36" rx="16" ry="10"/><ellipse cx="20" cy="40" rx="8" ry="7"/><ellipse cx="50" cy="42" rx="8" ry="7"/><ellipse cx="4" cy="18" rx="7" ry="10"/><ellipse cx="5" cy="38" rx="6" ry="8"/><ellipse cx="63" cy="16" rx="8" ry="10"/><ellipse cx="64" cy="36" rx="6" ry="9"/></g><g filter="url(#b2)" fill="#67686c"><rect x="6" y="44" width="56" height="22"/></g><path d="M0 84 L3 80 L6 83 L9 78 L12 82 L15 77 L18 82 L22 79 L26 83 L30 80 L34 84 L38 80 L42 83 L45 78 L49 82 L52 77 L56 82 L60 79 L64 83 L68 80 V96 H0Z" fill="#626367" filter="url(#b1)"/><rect y="88" width="68" height="14" fill="#717276" filter="url(#b2)"/></svg>
<div class="t" style="left:194px;top:195.6px;height:15px;line-height:15px;font-size:12px;color:#f0f0f0;width:68px;text-align:center;"><span style="display:inline-block;transform:scaleX(0.9917);transform-origin:50% 50%">AB-510</span></div>
<svg style="position:absolute;left:194px;top:230px;" width="68" height="77" viewBox="0 0 68 77"><defs><linearGradient id="s1" x1="0" y1="0" x2="0" y2="1"><stop offset="0" stop-color="#66676b"/><stop offset="0.1" stop-color="#6b6c70"/><stop offset="1" stop-color="#717276"/></linearGradient><filter id="sw" x="0" y="0" width="100%" height="100%"><feTurbulence type="fractalNoise" baseFrequency="0.05 0.45" numOctaves="2" seed="4"/><feColorMatrix values="0 0 0 0 0.36  0 0 0 0 0.365  0 0 0 0 0.38  0 0 0 1.6 -0.62"/></filter></defs><rect width="68" height="77" fill="url(#s1)"/><rect width="68" height="77" filter="url(#sw)" opacity="0.55"/></svg>
<div class="t" style="left:194px;top:321.6px;height:15px;line-height:15px;font-size:12px;color:#f0f0f0;width:68px;text-align:center;"><span style="display:inline-block;transform:scaleX(0.9917);transform-origin:50% 50%">AB-505</span></div>
<svg style="position:absolute;left:194px;top:346px;" width="68" height="96" viewBox="0 0 68 96"><defs><linearGradient id="c1" x1="0" y1="0" x2="0" y2="1"><stop offset="0" stop-color="#2a2a2e"/><stop offset="1" stop-color="#5a5b5f"/></linearGradient><linearGradient id="c2" x1="0" y1="0" x2="0" y2="1"><stop offset="0" stop-color="#2c2c30"/><stop offset="0.6" stop-color="#4c4d51"/><stop offset="1" stop-color="#77787c"/></linearGradient><filter id="cb"><feGaussianBlur stdDeviation="0.9"/></filter></defs><rect width="68" height="37" fill="url(#c1)"/><g filter="url(#cb)" fill="#77787c"><ellipse cx="6" cy="18" rx="7" ry="7"/><ellipse cx="18" cy="14" rx="8" ry="7"/><ellipse cx="27" cy="24" rx="9" ry="8"/><ellipse cx="12" cy="30" rx="14" ry="8"/><ellipse cx="50" cy="12" rx="9" ry="9"/><ellipse cx="62" cy="18" rx="7" ry="8"/><ellipse cx="42" cy="26" rx="9" ry="8"/><ellipse cx="56" cy="30" rx="13" ry="8"/><rect x="0" y="30" width="68" height="7"/></g><g fill="#85868a" filter="url(#cb)"><ellipse cx="17" cy="11" rx="5" ry="3.5"/><ellipse cx="50" cy="8" rx="6" ry="4"/><ellipse cx="28" cy="21" rx="5" ry="3"/></g><rect y="37" width="68" height="2" fill="#7b7c80"/><rect y="39" width="68" height="57" fill="url(#c2)"/><g filter="url(#cb)" fill="#707175"><ellipse cx="30" cy="52" rx="9" ry="8"/><ellipse cx="18" cy="62" rx="8" ry="7"/><ellipse cx="38" cy="66" rx="12" ry="9"/><ellipse cx="8" cy="76" rx="10" ry="9"/><ellipse cx="28" cy="80" rx="14" ry="10"/><ellipse cx="56" cy="72" rx="9" ry="8"/><ellipse cx="62" cy="84" rx="9" ry="8"/><ellipse cx="46" cy="86" rx="12" ry="8"/><rect x="0" y="88" width="68" height="8"/></g><g filter="url(#cb)" fill="#8a8b8f"><ellipse cx="30" cy="49" rx="6" ry="4"/><ellipse cx="17" cy="59" rx="5" ry="3.5"/><ellipse cx="40" cy="62" rx="7" ry="4"/><ellipse cx="8" cy="72" rx="6" ry="4"/><ellipse cx="56" cy="68" rx="6" ry="4"/><ellipse cx="30" cy="76" rx="8" ry="4"/></g><g filter="url(#cb)" fill="#4e4f53"><ellipse cx="22" cy="72" rx="6" ry="3"/><ellipse cx="48" cy="78" rx="7" ry="3"/><ellipse cx="12" cy="86" rx="7" ry="2.5"/></g></svg>
<div class="t" style="left:194px;top:447.6px;height:15px;line-height:15px;font-size:12px;color:#f0f0f0;width:68px;text-align:center;"><span style="display:inline-block;transform:scaleX(0.9917);transform-origin:50% 50%">AB-530</span></div>
<svg style="position:absolute;left:194px;top:472px;" width="68" height="96" viewBox="0 0 68 96"><defs><linearGradient id="bm" x1="0" y1="0" x2="0" y2="1"><stop offset="0" stop-color="#58595d"/><stop offset="0.45" stop-color="#66676b"/><stop offset="1" stop-color="#747579"/></linearGradient><filter id="bn" x="0" y="0" width="100%" height="100%"><feTurbulence type="fractalNoise" baseFrequency="0.32 0.22" numOctaves="2" seed="7"/><feColorMatrix values="0 0 0 0 0.3  0 0 0 0 0.305  0 0 0 0 0.32  0 0 0 2.4 -1.05"/></filter><linearGradient id="bf" x1="0" y1="0" x2="0" y2="1"><stop offset="0" stop-color="#fff"/><stop offset="0.75" stop-color="#fff" stop-opacity="0.55"/><stop offset="1" stop-color="#fff" stop-opacity="0.25"/></linearGradient><mask id="bk"><rect width="68" height="96" fill="url(#bf)"/></mask></defs><rect width="68" height="96" fill="url(#bm)"/><g stroke="#5d5e62" stroke-width="1.6" opacity="0.8"><path d="M4 0V96M12 0V96M19 0V96M27 0V96M35 0V96M44 0V96M52 0V96M59 0V96M65 0V96"/></g><g stroke="#7c7d81" stroke-width="1" opacity="0.7"><path d="M8 20V96M23 30V96M31 20V96M40 36V96M48 26V96M56 40V96"/></g><rect width="68" height="96" filter="url(#bn)" mask="url(#bk)" opacity="0.85"/></svg>
<div class="t" style="left:194px;top:573.6px;height:15px;line-height:15px;font-size:12px;color:#f0f0f0;width:68px;text-align:center;"><span style="display:inline-block;transform:scaleX(0.9392);transform-origin:50% 50%">CB-591(上)</span></div>
<svg style="position:absolute;left:194px;top:607px;" width="68" height="82" viewBox="0 0 68 82"><defs><linearGradient id="rf" x1="0" y1="0" x2="0" y2="1"><stop offset="0" stop-color="#fff" stop-opacity="0.9"/><stop offset="0.6" stop-color="#fff" stop-opacity="0.6"/><stop offset="1" stop-color="#fff" stop-opacity="0"/></linearGradient><mask id="rk"><rect width="68" height="82" fill="url(#rf)"/></mask></defs><g mask="url(#rk)" stroke="#727377" stroke-width="1"><path d="M3 0V70M7 4V50M11 0V76M16 0V60M21 2V80M25 0V66M30 0V74M34 6V58M38 0V78M43 0V62M47 3V72M52 0V68M56 0V80M61 0V56M65 0V74"/></g><g mask="url(#rk)" stroke="#6d6e72" stroke-width="1"><path d="M21 20V66M22 30V60"/></g></svg>
<div class="t" style="left:194px;top:699.6px;height:15px;line-height:15px;font-size:12px;color:#f0f0f0;width:68px;text-align:center;"><span style="display:inline-block;transform:scaleX(0.9392);transform-origin:50% 50%">CB-646(上)</span></div>
<svg style="position:absolute;left:194px;top:738px;" width="68" height="58" viewBox="0 0 68 58"><defs><filter id="tn" x="0" y="0" width="100%" height="100%"><feTurbulence type="fractalNoise" baseFrequency="0.5" numOctaves="2" seed="3"/><feColorMatrix values="0 0 0 0 0.36  0 0 0 0 0.365  0 0 0 0 0.38  0 0 0 2.2 -0.9"/></filter><clipPath id="tc"><path d="M0 2 C8 -1 18 1 21 8 C25 16 27 26 26 36 C25 44 22 50 18 54 L0 54Z"/></clipPath></defs><path d="M0 2 C8 -1 18 1 21 8 C25 16 27 26 26 36 C25 44 22 50 18 54 L0 54Z" fill="#737478"/><rect width="30" height="56" filter="url(#tn)" clip-path="url(#tc)"/><path d="M4 53 L28 52 L54 51" stroke="#6c6d71" stroke-width="1.2"/><path d="M8 4 L20 40 M2 20 L22 14" stroke="#67686c" stroke-width="0.8"/></svg>
<div class="t" style="left:194px;top:825.6px;height:15px;line-height:15px;font-size:12px;color:#f0f0f0;width:68px;text-align:center;"><span style="display:inline-block;transform:scaleX(0.8587);transform-origin:50% 50%">305</span></div>
<svg style="position:absolute;left:194px;top:850px;" width="68" height="47" viewBox="0 0 68 47"><defs><filter id="fb"><feGaussianBlur stdDeviation="2.2"/></filter><filter id="fn" x="0" y="0" width="100%" height="100%"><feTurbulence type="fractalNoise" baseFrequency="0.18" numOctaves="3" seed="11"/><feColorMatrix values="0 0 0 0 0.2  0 0 0 0 0.2  0 0 0 0 0.22  0 0 0 2 -0.9"/></filter></defs><rect width="68" height="47" fill="#5e5f63"/><g filter="url(#fb)"><ellipse cx="28" cy="24" rx="20" ry="13" fill="#7c7d81"/><ellipse cx="54" cy="8" rx="16" ry="10" fill="#38393d"/><ellipse cx="8" cy="40" rx="12" ry="10" fill="#38393d"/><ellipse cx="58" cy="40" rx="10" ry="9" fill="#404145"/><ellipse cx="6" cy="6" rx="8" ry="6" fill="#4c4d51"/></g><rect width="68" height="47" filter="url(#fn)" opacity="0.6"/></svg>
<div style="left:262px;top:92px;width:11px;height:805px;background:#68696c;border-left:1px solid #5a5b5e;"></div>
<div style="left:262px;top:92px;width:11px;height:11px;background:linear-gradient(#838488,#747578);border:1px solid #9a9b9e;border-right-color:#68696c;border-bottom-color:#68696c;border-radius:2px;"></div>
<svg style="position:absolute;left:264.7px;top:96px;" width="5.6" height="3.2" viewBox="0 0 5.6 3.2"><path d="M0 3.2 L2.8 0 L5.6 3.2 Z" fill="#2e2e31"/></svg>
<div style="left:262px;top:886px;width:11px;height:11px;background:linear-gradient(#838488,#747578);border:1px solid #9a9b9e;border-right-color:#68696c;border-bottom-color:#68696c;border-radius:2px;"></div>
<svg style="position:absolute;left:264.7px;top:890px;" width="5.6" height="3.2" viewBox="0 0 5.6 3.2"><path d="M0 0 L5.6 0 L2.8 3.2 Z" fill="#2e2e31"/></svg>
<div style="left:262px;top:104px;width:11px;height:36px;background:linear-gradient(90deg,#898a8e,#77787c);border:1px solid #5c5d60;border-left-color:#a0a1a4;border-top-color:#a0a1a4;border-radius:2px;"></div>
<div style="left:265px;top:120px;width:5px;height:1px;background:#4f5053;"></div>
<div style="left:265px;top:122px;width:5px;height:1px;background:#4f5053;"></div>
<div style="left:265px;top:124px;width:5px;height:1px;background:#4f5053;"></div>
<div style="left:275px;top:89px;width:1px;height:945px;background:#3e3f42;"></div>
<div style="left:276px;top:89px;width:1px;height:945px;background:#6e6f72;"></div>
<div style="left:277px;top:89px;width:1px;height:945px;background:#3e3f42;"></div>
<div style="left:278px;top:89px;width:1px;height:945px;background:#6e6f72;"></div>
<div style="left:279px;top:89px;width:1px;height:945px;background:#3e3f42;"></div>
<div style="left:280px;top:89px;width:1px;height:945px;background:#6e6f72;"></div>
<div style="left:281px;top:89px;width:1px;height:945px;background:#3e3f42;"></div>
<div style="left:282px;top:89px;width:1px;height:945px;background:#6e6f72;"></div>
<div style="left:283px;top:89px;width:1px;height:945px;background:#3e3f42;"></div>
<div style="left:284px;top:89px;width:1px;height:945px;background:#6e6f72;"></div>
<div style="left:283px;top:47px;width:1px;height:42px;background:#3a3a3c;"></div>
<div style="left:284.5px;top:89px;width:1.5px;height:945px;background:#2e2e31;"></div>
<div style="left:1356px;top:47px;width:41px;height:20px;background:linear-gradient(#69696c,#474749);border-top:1px solid #727275;border-bottom:1px solid #39393b;"></div>
<div style="left:1358.0px;top:53px;width:1px;height:8px;background:#8a8b8e;"></div>
<div style="left:1360.3px;top:53px;width:1px;height:8px;background:#8a8b8e;"></div>
<div style="left:1362.6px;top:53px;width:1px;height:8px;background:#8a8b8e;"></div>
<div style="left:1364.9px;top:53px;width:1px;height:8px;background:#8a8b8e;"></div>
<svg style="position:absolute;left:1384px;top:50.4px;" width="11" height="13.4" viewBox="0 0 11 13.4"><path d="M0 0 L6 6.7 L0 13.4 L1.8 6.7 Z" fill="#7a7b7e"/><path d="M5 0 L11 6.7 L5 13.4 L6.8 6.7 Z" fill="#7a7b7e"/></svg>
<div style="left:1356px;top:67px;width:41px;height:2px;background:#85868a;"></div>
<div style="left:1356px;top:69px;width:41px;height:21px;background:linear-gradient(#47474a,#5a5a5d);border-top:1px solid #38383a;"></div>
<div style="left:1357px;top:70px;width:19px;height:15px;background:linear-gradient(#5c5c5f,#4e4e51);border-right:1px solid #3c3c3e;border-bottom:1px solid #404043;"></div>
<svg style="position:absolute;left:1361.5px;top:73.5px;" width="10" height="8" viewBox="0 0 10 8"><path d="M0 0 L3.4 4 L0 8 Z" fill="#7f8084"/><path d="M4.5 1h5M4.5 4h5M4.5 7h5" stroke="#7f8084" stroke-width="1.4"/></svg>
<div style="left:1377px;top:70px;width:19px;height:20px;background:#7b7c80;"></div>
<svg style="position:absolute;left:1383.5px;top:71px;z-index:2;" width="8" height="18" viewBox="0 0 8 18"><path d="M4 0.3 C5 3 6.6 6 6.6 9.5 C6.6 12 5.6 13.5 5.2 14.5 L2.8 14.5 C2.4 13.5 1.4 12 1.4 9.5 C1.4 6 3 3 4 0.3Z" fill="#ececec" stroke="#161618" stroke-width="1"/><path d="M4 3.5 C4.6 5.5 5 7.5 5 10 L4.3 13.5 L3.7 13.5 L3 10 C3 7.5 3.4 5.5 4 3.5Z" fill="#77787b"/><rect x="2.8" y="14" width="2.4" height="2" fill="#d8d8d8" stroke="#161618" stroke-width="0.5"/><path d="M0.3 18 C0.8 16 2.4 15.8 4 15.8 C5.6 15.8 7.2 16 7.7 18Z" fill="#0a0a0a"/></svg>
<div style="left:1356px;top:89px;width:41px;height:945px;background:#7b7c80;"></div>
<div style="left:1356px;top:90px;width:40px;height:132px;background:#7b7c80;border:1px solid #46474a;"></div>
<div style="left:1356px;top:224px;width:40px;height:232px;background:#7b7c80;border:1px solid #46474a;"></div>
<div style="left:1356px;top:458px;width:40px;height:160px;background:#7b7c80;border:1px solid #46474a;"></div>
<div style="left:1364px;top:144px;width:24px;height:23px;background:#7f9fb0;border-radius:3px;border:1px solid #6a8898;"></div>
<svg style="position:absolute;left:1367px;top:94px;" width="18" height="20" viewBox="0 0 18 20"><circle cx="7.5" cy="7.5" r="5.6" fill="#e8e8e8" stroke="#1c1c1e" stroke-width="1.3"/><circle cx="7" cy="7" r="3.4" fill="#fff"/><path d="M11.5 11.5 L16 17" stroke="#1c1c1e" stroke-width="2.6" stroke-linecap="round"/><path d="M5 8 L8 6.5 L8 9.5Z" fill="#1c1c1e"/></svg>
<svg style="position:absolute;left:1366px;top:121px;" width="20" height="20" viewBox="0 0 20 20"><path d="M7 19 L7 14.5 L1 10.8 L2 9.2 L7 11 L4.2 4.2 L5.8 3.4 L9 9.5 L9.3 1 L11 1 L11.5 9.5 L14.4 3 L16 3.7 L13.8 10.5 L18.6 7.8 L19.5 9.2 L14 14.8 L14 19Z" fill="#f4f4f4" stroke="#555" stroke-width="0.5"/></svg>
<svg style="position:absolute;left:1366px;top:146px;" width="21" height="20" viewBox="0 0 21 20"><path d="M1 5 L5 1 H15 V11 L11 15 H1Z" fill="#f2f2f2" stroke="#555" stroke-width="1"/><path d="M1 5 H11 V15 M11 5 L15 1 M5 1 V11 H15 M5 11 L1 15" fill="none" stroke="#777" stroke-width="0.7"/><path d="M12 8 L19 14.5 L16 14.5 L17.8 18.5 L16 19.3 L14.2 15.5 L12 17.5Z" fill="#1a1a1c" stroke="#f4f4f4" stroke-width="0.7"/></svg>
<svg style="position:absolute;left:1366px;top:171px;" width="20" height="21" viewBox="0 0 20 21"><defs><radialGradient id="wg"><stop offset="0" stop-color="#fff"/><stop offset="0.6" stop-color="#bbb"/><stop offset="1" stop-color="#555" stop-opacity="0"/></radialGradient></defs><path d="M8 0V16M0 8H16M2.5 2.5L13.5 13.5M13.5 2.5L2.5 13.5M5 1L11 15M11 1L5 15M1 5L15 11M1 11L15 5" stroke="#1c1c1e" stroke-width="0.9"/><circle cx="8" cy="8" r="4.5" fill="url(#wg)"/><path d="M10.5 10.5 L18.5 19.5" stroke="#222" stroke-width="2.6"/><path d="M10.5 10.5 L18.5 19.5" stroke="#e8e8e8" stroke-width="1.2"/></svg>
<svg style="position:absolute;left:1369px;top:197px;" width="14" height="22" viewBox="0 0 14 22"><circle cx="10.5" cy="3.5" r="3" fill="#58585a" stroke="#1c1c1e" stroke-width="0.8"/><path d="M9 6 L11.5 7.5 L4 19 L1.5 21 L2 18Z" fill="#bbb" stroke="#1c1c1e" stroke-width="1"/></svg>
<svg style="position:absolute;left:1365px;top:229px;" width="22" height="16" viewBox="0 0 22 16"><ellipse cx="12" cy="6.5" rx="8.5" ry="4.6" fill="none" stroke="#1c1c1e" stroke-width="1.3" transform="rotate(-12 12 6.5)"/><path d="M4 9 C2 11 3 13 5.5 12.5" fill="none" stroke="#1c1c1e" stroke-width="1.2"/></svg>
<svg style="position:absolute;left:1367px;top:254px;" width="19" height="18" viewBox="0 0 19 18"><path d="M6 9 L15 0.5 L17.5 3 L9 12Z" fill="#c8c8c8" stroke="#444" stroke-width="0.7"/><ellipse cx="6" cy="12" rx="4" ry="3.2" fill="#eee" stroke="#444" stroke-width="0.7"/><ellipse cx="7" cy="15.5" rx="6" ry="1.8" fill="#1c1c1e"/></svg>
<svg style="position:absolute;left:1367px;top:278px;" width="20" height="21" viewBox="0 0 20 21"><path d="M8 8 L19 1 M8 9 L19 12" stroke="#55565a" stroke-width="1"/><rect x="4.5" y="5" width="4" height="5" fill="#1c1c1e"/><path d="M1 13 C1 10 12 10 12 13 V18 C12 21 1 21 1 18Z" fill="#e8e8e8" stroke="#1c1c1e" stroke-width="1"/><path d="M1 15 C3 17 10 17 12 15" fill="none" stroke="#1c1c1e" stroke-width="1.6"/></svg>
<div style="left:1367px;top:306px;width:18px;height:18px;background:radial-gradient(circle,#5a5b5e 0,#66676a 50%,transparent 72%);"></div>
<svg style="position:absolute;left:1368px;top:331px;" width="16" height="21" viewBox="0 0 16 21"><circle cx="4.5" cy="4.5" r="3.6" fill="#9a9a9c" stroke="#333" stroke-width="0.8"/><path d="M3 8 L8.5 4.5 L13.5 14 L14.5 20 L9.5 16.5Z" fill="#c0c0c0" stroke="#1c1c1e" stroke-width="1"/><path d="M14.5 20 L11 12" stroke="#1c1c1e" stroke-width="0.8"/></svg>
<svg style="position:absolute;left:1367px;top:358px;" width="19" height="20" viewBox="0 0 19 20"><path d="M4 1 L17 0 L16 7 L3 9Z" fill="#f2f2f2" stroke="#555" stroke-width="0.8"/><path d="M3 10 L16 8 L14 17 L1 18Z" fill="#dcdcdc" stroke="#555" stroke-width="0.8"/><path d="M2 19 L15 18" stroke="#444" stroke-width="1.2"/></svg>
<svg style="position:absolute;left:1366px;top:384px;" width="21" height="20" viewBox="0 0 21 20"><path d="M5 9 L13 3 L20 11 L19 18 L10 19Z" fill="#e0e0e0" stroke="#444" stroke-width="0.8"/><path d="M0 15 C1 9 4 8 7 8 L5 11 C3 11 2 12 2 15Z" fill="#1c1c1e"/><path d="M11 6 L15 0.5 L18 2 L13.5 7.5Z" fill="#888" stroke="#1c1c1e" stroke-width="0.9"/></svg>
<svg style="position:absolute;left:1366px;top:410px;" width="21" height="18" viewBox="0 0 21 18"><defs><linearGradient id="bl" x1="0" y1="0" x2="1" y2="0"><stop offset="0" stop-color="#111"/><stop offset="1" stop-color="#fff"/></linearGradient></defs><path d="M6 0 C9 5 12 8 12 12 C12 16 9 18 6 18 C3 18 0 16 0 12 C0 8 3 5 6 0Z" fill="#1e1e20"/><path d="M14 0 C17 5 21 8 21 12 C21 16 18 18 14 18 C8 18 5 15 8 10 C10 6 12 4 14 0Z" fill="url(#bl)"/></svg>
<svg style="position:absolute;left:1368px;top:435px;" width="17" height="21" viewBox="0 0 17 21"><path d="M1 4 L7 1 L16 15 L15 20 L9 20Z" fill="#e6e6e6" stroke="#555" stroke-width="0.9"/><path d="M9 20 L10 15 L16 15" fill="none" stroke="#666" stroke-width="0.8"/></svg>
<div style="left:1368px;top:466px;width:15px;height:15px;background:linear-gradient(135deg,#fafafa,#777 45%,#0a0a0a);border:1px solid #2c2c2e;"></div>
<svg style="position:absolute;left:1367px;top:491px;" width="18" height="16" viewBox="0 0 18 16"><defs><linearGradient id="fi" x1="0" y1="0" x2="0" y2="1"><stop offset="0" stop-color="#2e2e30"/><stop offset="1" stop-color="#c8c8c8"/></linearGradient></defs><path d="M1 15 C1 6 6 1 17 0 L16 9 C10 9 6 11 1 15Z" fill="url(#fi)"/></svg>
<svg style="position:absolute;left:1365px;top:515px;" width="23" height="22" viewBox="0 0 23 22"><path d="M1 1 L9 4 L6.5 5.5 L11 10 L9.5 11.5 L5 7 L3.5 9.5Z" fill="#1c1c1e"/><path d="M13 7 L15.5 10 H14 V13.5 H17.5 V12 L20.5 14.5 L17.5 17 V15.5 H14 V19 H15.5 L13 22 L10.5 19 H12 V15.5 H8.5 V17 L5.5 14.5 L8.5 12 V13.5 H12 V10 H10.5Z" fill="#2a2a2c"/></svg>
<svg style="position:absolute;left:1368px;top:545px;" width="16" height="16" viewBox="0 0 16 16"><path d="M0 0 H16 V5 L0 8Z M0 11 L16 8 V16 H0Z" fill="#f6f6f6"/></svg>
<svg style="position:absolute;left:1366px;top:568px;" width="20" height="20" viewBox="0 0 20 20"><path d="M10 0 L11.5 4 L14 1 L14 5 L17.5 3 L16 6.5 L20 6.5 L17 9 L20 11 L16.5 12 L18.5 15.5 L15 14.5 L15 18.5 L12.5 15.5 L10 20 L8.5 15.5 L5.5 18.5 L5.5 14.5 L1.5 16 L4 12.5 L0 11 L3.5 9 L0.5 6 L4.5 6.5 L3 2.5 L6.5 5 L7 1 L9 4Z" fill="#3c3c3f"/><circle cx="10" cy="10" r="6.5" fill="#3c3c3f"/></svg>
<svg style="position:absolute;left:1364px;top:594px;" width="24" height="22" viewBox="0 0 24 22"><path d="M1 8 L10 13.5 L1 19Z" fill="#2c6e8c" stroke="#3aa0c8" stroke-width="1.4"/><path d="M8 15 H21" stroke="#1c1c1e" stroke-width="2"/><path d="M12 3 C16 0 20 1 19 5 C18 9 14 11 11 11 C9 8 10 5 12 3Z" fill="#f4f4f4" stroke="#1c1c1e" stroke-width="1.2"/><path d="M11 11 L8 14" stroke="#1c1c1e" stroke-width="1.3"/></svg>
<div style="left:1372px;top:634px;width:23px;height:23px;background:#ffffff;border:1px solid #e0e0e0;"></div>
<div style="left:1357px;top:619px;width:25px;height:24px;background:#000;border:2px solid #8fc0dc;"></div>
<div style="left:1360px;top:622px;width:19px;height:18px;background:#000;border:1px solid #fff;"></div>
<div style="left:1357px;top:659px;width:38px;height:9px;background:conic-gradient(#fff 25%,#b4b4b6 0 50%,#fff 0 75%,#b4b4b6 0) 0 0/9.4px 9px;"></div>
<div style="left:1397px;top:47px;width:1px;height:987px;background:#48494c;"></div>
<div style="left:1398px;top:47px;width:199px;height:20px;background:linear-gradient(#69696c,#474749);border-top:1px solid #727275;border-bottom:1px solid #39393b;"></div>
<div style="left:1400.0px;top:53px;width:1px;height:8px;background:#8a8b8e;"></div>
<div style="left:1402.3px;top:53px;width:1px;height:8px;background:#8a8b8e;"></div>
<div style="left:1404.6px;top:53px;width:1px;height:8px;background:#8a8b8e;"></div>
<div style="left:1406.9px;top:53px;width:1px;height:8px;background:#8a8b8e;"></div>
<svg style="position:absolute;left:1563.5px;top:50.4px;" width="6" height="13.4" viewBox="0 0 6 13.4"><path d="M0 0 L6 6.7 L0 13.4 L1.8 6.7 Z" fill="#7a7b7e"/></svg>
<svg style="position:absolute;left:1586px;top:50.4px;" width="11" height="13.4" viewBox="0 0 11 13.4"><path d="M0 0 L6 6.7 L0 13.4 L1.8 6.7 Z" fill="#7a7b7e"/><path d="M5 0 L11 6.7 L5 13.4 L6.8 6.7 Z" fill="#7a7b7e"/></svg>
<div style="left:1398px;top:67px;width:199px;height:2px;background:#85868a;"></div>
<div style="left:1398px;top:89px;width:199px;height:945px;background:#7b7c80;"></div>
<div style="left:1398px;top:69.3px;width:199px;height:16px;background:linear-gradient(#47474a,#5a5a5d);border-top:1px solid #38383a;"></div>
<div style="left:1398px;top:70px;width:19px;height:15px;background:linear-gradient(#5c5c5f,#4e4e51);border-right:1px solid #3c3c3e;border-bottom:1px solid #404043;"></div>
<svg style="position:absolute;left:1402.5px;top:73.5px;" width="10" height="8" viewBox="0 0 10 8"><path d="M0 0 L3.4 4 L0 8 Z" fill="#7f8084"/><path d="M4.5 1h5M4.5 4h5M4.5 7h5" stroke="#7f8084" stroke-width="1.4"/></svg>
<div style="left:1417px;top:70px;width:97px;height:18px;background:linear-gradient(#86878b,#7b7c80 60%);border-top:1px solid #4a4a4d;"></div>
<svg style="position:absolute;left:1420px;top:70px;z-index:2;" width="21" height="19" viewBox="0 0 21 19"><rect x="2" y="17" width="17" height="1.6" fill="#f4f4f4"/><rect x="17.6" y="15" width="1.4" height="3" fill="#f4f4f4"/><rect x="1.3" y="14.2" width="16.4" height="3.3" fill="#050505"/><path d="M2 11.5 L6.5 11.5 L8.5 13.5 C10.5 8 13.5 4 18.5 1.6 C14.5 5.5 11.5 10.5 9.2 16.5 L7.8 16.5 C6.5 14.5 4.5 12.8 2 11.5Z" fill="#c01018"/><path d="M9 14.5 C11 9 14 5 18 2" stroke="#e87070" stroke-width="0.6" fill="none"/></svg>
<div class="t" style="left:1443.0px;top:72px;height:15px;line-height:15px;font-size:11px;color:#f0f0f0;"><span style="display:inline-block;transform:scaleX(0.6737);transform-origin:0 50%">レイヤープロパティ</span></div>
<div style="left:1514px;top:71px;width:28px;height:14px;background:linear-gradient(#6d6e71,#636467);border:1px solid #3e3e41;border-bottom:none;"></div>
<div style="left:1542px;top:71px;width:28px;height:14px;background:linear-gradient(#6d6e71,#636467);border:1px solid #3e3e41;border-bottom:none;"></div>
<svg style="position:absolute;left:1520px;top:72px;" width="16" height="12" viewBox="0 0 16 12"><path d="M1 2 C4 0 8 0 11 2M1 5 C4 3 8 3 11 5" stroke="#3e3e40" fill="none"/><ellipse cx="10" cy="8.5" rx="5" ry="3.5" fill="#9a9b9e" stroke="#48484a"/></svg>
<svg style="position:absolute;left:1550px;top:72px;" width="12" height="12" viewBox="0 0 12 12"><path d="M4.5 0 H7.5 V4 L12 12 H0 L4.5 4Z" fill="#8e8f92" stroke="#505053" stroke-width="0.8"/></svg>
<div style="left:1398px;top:86px;width:199px;height:4px;background:#77787c;"></div>
<div style="left:1398px;top:90px;width:195px;height:174px;background:#7b7c80;border:1px solid #4b4c4f;border-top:2px solid #48494c;"></div>
<div style="left:1580px;top:92px;width:12px;height:171px;background:#68696c;border-left:1px solid #5a5b5e;"></div>
<div style="left:1594px;top:90px;width:1px;height:174px;background:#3e3f42;"></div>
<div style="left:1595px;top:90px;width:1px;height:174px;background:#6e6f72;"></div>
<div style="left:1596px;top:90px;width:1px;height:174px;background:#3e3f42;"></div>
<div style="left:1597px;top:90px;width:1px;height:174px;background:#6e6f72;"></div>
<div style="left:1404px;top:99px;width:4px;height:1px;background:#696a6d;"></div>
<div style="left:1404px;top:100px;width:4px;height:1px;background:#8a8b8f;"></div>
<div style="left:1434px;top:99px;width:142px;height:1px;background:#696a6d;"></div>
<div style="left:1434px;top:100px;width:142px;height:1px;background:#8a8b8f;"></div>
<div class="t" style="left:1407.1px;top:92px;height:15px;line-height:15px;font-size:12px;color:#f6f6f6;"><span style="display:inline-block;transform:scaleX(1.0208);transform-origin:0 50%">効果</span></div>
<div style="left:1468px;top:107px;width:109px;height:20px;background:linear-gradient(#747579,#606164);border:1px solid #4c4d50;border-radius:3px;box-shadow:inset 0 1px 0 #8a8b8f;"></div>
<div style="left:1471px;top:109px;width:16px;height:16px;background:#1e1e20;border:3px solid #fafafa;border-radius:8px;"></div>
<div style="left:1495px;top:112px;width:14px;height:14px;background:#2c86e0;border-radius:7px;"></div>
<div style="left:1497px;top:109px;width:14px;height:14px;background:#3890e8;border:1px solid #0c1c30;border-radius:7px;"></div>
<div style="left:1519px;top:109px;width:16px;height:16px;background:conic-gradient(#050505 25%,#7a7b7f 0 50%,#050505 0 75%,#7a7b7f 0) 0 0/4px 4px;"></div>
<div style="left:1547px;top:113px;width:12px;height:12px;background:#ffffff;"></div>
<div style="left:1543px;top:109px;width:12px;height:12px;background:#48b0f8;border:1px solid #3890d8;"></div>
<svg style="position:absolute;left:1565px;top:115px;" width="9" height="5" viewBox="0 0 9 5"><path d="M0 0 L9 0 L4.5 5 Z" fill="#3f4043"/></svg>
<div style="left:1404px;top:136px;width:4px;height:1px;background:#696a6d;"></div>
<div style="left:1404px;top:137px;width:4px;height:1px;background:#8a8b8f;"></div>
<div style="left:1445px;top:136px;width:131px;height:1px;background:#696a6d;"></div>
<div style="left:1445px;top:137px;width:131px;height:1px;background:#8a8b8f;"></div>
<div class="t" style="left:1407.1px;top:129px;height:15px;line-height:15px;font-size:12px;color:#f6f6f6;"><span style="display:inline-block;transform:scaleX(0.9861);transform-origin:0 50%">表現色</span></div>
<div style="left:1416px;top:148px;width:109px;height:19px;background:linear-gradient(#808185,#66676a);border:1px solid #4c4d50;border-radius:3px;box-shadow:inset 0 1px 0 #919296;"></div>
<svg style="position:absolute;left:1438px;top:150px;" width="14" height="14" viewBox="0 0 14 14"><rect width="14" height="14" fill="#0c0c0c"/><path d="M14 0.8 V13.2 H1.5Z" fill="#fff"/></svg>
<div class="t" style="left:1457.1px;top:150px;height:15px;line-height:15px;font-size:12px;color:#f8f8f8;"><span style="display:inline-block;transform:scaleX(0.7021);transform-origin:0 50%">モノクロ</span></div>
<svg style="position:absolute;left:1513px;top:155px;" width="9" height="5" viewBox="0 0 9 5"><path d="M0 0 L9 0 L4.5 5 Z" fill="#3f4043"/></svg>
<div style="left:1528px;top:148px;width:23px;height:19px;background:#a9c2d2;border:1px solid #7f9cad;border-radius:2px;"></div>
<div style="left:1533px;top:151px;width:13px;height:12px;background:#000;"></div>
<div style="left:1551px;top:149px;width:3px;height:17px;background:#58595c;"></div>
<div style="left:1554px;top:148px;width:23px;height:19px;background:#a9c2d2;border:1px solid #7f9cad;border-radius:2px;"></div>
<div style="left:1559px;top:151px;width:13px;height:12px;background:#fff;"></div>
<div style="left:1398px;top:264.2px;width:199px;height:1.1px;background:#8a8b8e;"></div>
<div style="left:1398px;top:265.5px;width:199px;height:16px;background:linear-gradient(#47474a,#5a5a5d);border-top:1px solid #38383a;"></div>
<div style="left:1398px;top:266.5px;width:19px;height:15px;background:linear-gradient(#5c5c5f,#4e4e51);border-right:1px solid #3c3c3e;border-bottom:1px solid #404043;"></div>
<svg style="position:absolute;left:1402.5px;top:270.0px;" width="10" height="8" viewBox="0 0 10 8"><path d="M0 0 L3.4 4 L0 8 Z" fill="#7f8084"/><path d="M4.5 1h5M4.5 4h5M4.5 7h5" stroke="#7f8084" stroke-width="1.4"/></svg>
<div style="left:1417px;top:266.5px;width:123px;height:18px;background:linear-gradient(#86878b,#7b7c80 60%);border-top:1px solid #4a4a4d;"></div>
<svg style="position:absolute;left:1421px;top:267.5px;z-index:2;" width="8" height="18" viewBox="0 0 8 18"><path d="M4 0.3 C5 3 6.6 6 6.6 9.5 C6.6 12 5.6 13.5 5.2 14.5 L2.8 14.5 C2.4 13.5 1.4 12 1.4 9.5 C1.4 6 3 3 4 0.3Z" fill="#ececec" stroke="#161618" stroke-width="1"/><path d="M4 3.5 C4.6 5.5 5 7.5 5 10 L4.3 13.5 L3.7 13.5 L3 10 C3 7.5 3.4 5.5 4 3.5Z" fill="#77787b"/><rect x="2.8" y="14" width="2.4" height="2" fill="#d8d8d8" stroke="#161618" stroke-width="0.5"/><path d="M0.3 18 C0.8 16 2.4 15.8 4 15.8 C5.6 15.8 7.2 16 7.7 18Z" fill="#0a0a0a"/></svg>
<svg style="position:absolute;left:1429.2px;top:272.1px;" width="11" height="11" viewBox="0 0 11 11"><circle cx="5.5" cy="5.5" r="3.6" fill="#111"/><circle cx="5.5" cy="5.5" r="4.4" fill="none" stroke="#111" stroke-width="2" stroke-dasharray="1.6 1.85"/><path d="M4 5.5H7M5.5 4V7" stroke="#7b7c80" stroke-width="0.8"/></svg>
<div class="t" style="left:1443.3px;top:268.5px;height:15px;line-height:15px;font-size:11px;color:#e8e8e8;width:92px;text-align:left;-webkit-mask-image:linear-gradient(90deg,#000 82%,rgba(0,0,0,0.25));"><span style="display:inline-block;transform:scaleX(0.6789);transform-origin:0 50%">ツールプロパティ[オブジェ</span></div>
<div style="left:1540px;top:267.5px;width:29px;height:14px;background:linear-gradient(#6d6e71,#636467);border:1px solid #3e3e41;border-bottom:none;"></div>
<div style="left:1569px;top:267.5px;width:28px;height:14px;background:linear-gradient(#6d6e71,#636467);border:1px solid #3e3e41;border-bottom:none;"></div>
<svg style="position:absolute;left:1546px;top:268.5px;" width="17" height="13" viewBox="0 0 17 13"><circle cx="8.5" cy="8" r="6.5" fill="#707174" stroke="#4c4c4f" stroke-width="1.4"/><rect x="7" y="7" width="3" height="3" fill="#4c4c4f"/></svg>
<svg style="position:absolute;left:1575px;top:271.5px;" width="15" height="10" viewBox="0 0 15 10"><path d="M1 9 L6 5 M5 8 L10 4 M9 7 L14 3 M4 4 L9 1" stroke="#404043" stroke-width="2" stroke-dasharray="2 1"/></svg>
<div style="left:1398px;top:281.5px;width:199px;height:6px;background:#77787c;"></div>
<div style="left:1398px;top:287.3px;width:195px;height:39.7px;background:#7b7c80;border:1px solid #4b4c4f;border-bottom:2px solid #2e2e30;"></div>
<div class="t" style="left:1399.1px;top:288px;height:15px;line-height:15px;font-size:12px;color:#f6f6f6;"><span style="display:inline-block;transform:scaleX(0.7181);transform-origin:0 50%">オブジェクト</span></div>
<svg style="position:absolute;left:1573px;top:306px;" width="19" height="19" viewBox="0 0 19 19"><circle cx="8.5" cy="8.5" r="7.5" fill="#7e7f83" stroke="#2c2c2e" stroke-width="1.5"/><path d="M5 6.5 C5 4 8 3 10 4.5 L8 6.5 L9.5 8 L11.5 6 C12.5 8 11.5 10 9.5 10 L15.5 16" fill="none" stroke="#f2f2f2" stroke-width="1.8"/><path d="M11 11 L16.5 16.5" stroke="#2c2c2e" stroke-width="1" transform="translate(1 1)"/></svg>
<div style="left:1398px;top:328px;width:195px;height:106px;background:#7b7c80;border:1px solid #4b4c4f;border-top:none;"></div>
<div style="left:1580px;top:329px;width:12px;height:104px;background:#68696c;border-left:1px solid #5a5b5e;"></div>
<div style="left:1594px;top:288px;width:1px;height:146px;background:#3e3f42;"></div>
<div style="left:1595px;top:288px;width:1px;height:146px;background:#6e6f72;"></div>
<div style="left:1596px;top:288px;width:1px;height:146px;background:#3e3f42;"></div>
<div style="left:1597px;top:288px;width:1px;height:146px;background:#6e6f72;"></div>
<div style="left:1404px;top:342px;width:4px;height:1px;background:#696a6d;"></div>
<div style="left:1404px;top:343px;width:4px;height:1px;background:#8a8b8f;"></div>
<div style="left:1434px;top:342px;width:142px;height:1px;background:#696a6d;"></div>
<div style="left:1434px;top:343px;width:142px;height:1px;background:#8a8b8f;"></div>
<div class="t" style="left:1407.1px;top:335px;height:15px;line-height:15px;font-size:12px;color:#f6f6f6;"><span style="display:inline-block;transform:scaleX(1.0208);transform-origin:0 50%">操作</span></div>
<div style="left:1416px;top:355px;width:161px;height:19px;background:linear-gradient(#808185,#66676a);border:1px solid #4c4d50;border-radius:3px;box-shadow:inset 0 1px 0 #919296;"></div>
<div class="t" style="left:1416px;top:357px;height:15px;line-height:15px;font-size:12px;color:#f8f8f8;width:150px;text-align:center;"><span style="display:inline-block;transform:scaleX(0.9833);transform-origin:50% 50%">透明箇所の操作</span></div>
<svg style="position:absolute;left:1565px;top:362px;" width="9" height="5" viewBox="0 0 9 5"><path d="M0 0 L9 0 L4.5 5 Z" fill="#3f4043"/></svg>
<div style="left:1416px;top:386px;width:161px;height:19px;background:linear-gradient(#808185,#66676a);border:1px solid #4c4d50;border-radius:3px;box-shadow:inset 0 1px 0 #919296;"></div>
<div class="t" style="left:1416px;top:388px;height:15px;line-height:15px;font-size:12px;color:#f8f8f8;width:150px;text-align:center;"><span style="display:inline-block;transform:scaleX(0.8288);transform-origin:50% 50%">選択可能なオブジェクト</span></div>
<svg style="position:absolute;left:1565px;top:393px;" width="9" height="5" viewBox="0 0 9 5"><path d="M0 0 L9 0 L4.5 5 Z" fill="#3f4043"/></svg>
<div style="left:1410px;top:380px;width:166px;height:1px;background:#696a6d;"></div>
<div style="left:1410px;top:381px;width:166px;height:1px;background:#8a8b8f;"></div>
<svg style="position:absolute;left:1554px;top:436px;" width="17" height="17" viewBox="0 0 17 17"><circle cx="8.5" cy="8.5" r="5.6" fill="none" stroke="#2e2e30" stroke-width="2.4" stroke-dasharray="3 2.2"/></svg>
<svg style="position:absolute;left:1576px;top:435px;" width="17" height="19" viewBox="0 0 17 19"><path d="M4 1 C1 3 1 8 5.5 9.5 V17 C5.5 19 10.5 19 10.5 17 V9.5 C15 8 15 3 12 1 V6 H4Z" fill="#eee" stroke="#1e1e20" stroke-width="1.3"/><path d="M-1 3 L3 5 L2 12Z" fill="#8e8f92"/></svg>
<div style="left:1398px;top:455.3px;width:199px;height:1.1px;background:#8a8b8e;"></div>
<div style="left:1398px;top:456.6px;width:199px;height:16px;background:linear-gradient(#47474a,#5a5a5d);border-top:1px solid #38383a;"></div>
<div style="left:1398px;top:457.6px;width:19px;height:15px;background:linear-gradient(#5c5c5f,#4e4e51);border-right:1px solid #3c3c3e;border-bottom:1px solid #404043;"></div>
<svg style="position:absolute;left:1402.5px;top:461.1px;" width="10" height="8" viewBox="0 0 10 8"><path d="M0 0 L3.4 4 L0 8 Z" fill="#7f8084"/><path d="M4.5 1h5M4.5 4h5M4.5 7h5" stroke="#7f8084" stroke-width="1.4"/></svg>
<div style="left:1417px;top:457.6px;width:95px;height:18px;background:linear-gradient(#86878b,#7b7c80 60%);border-top:1px solid #4a4a4d;"></div>
<svg style="position:absolute;left:1421px;top:458.6px;z-index:2;" width="8" height="18" viewBox="0 0 8 18"><path d="M4 0.3 C5 3 6.6 6 6.6 9.5 C6.6 12 5.6 13.5 5.2 14.5 L2.8 14.5 C2.4 13.5 1.4 12 1.4 9.5 C1.4 6 3 3 4 0.3Z" fill="#ececec" stroke="#161618" stroke-width="1"/><path d="M4 3.5 C4.6 5.5 5 7.5 5 10 L4.3 13.5 L3.7 13.5 L3 10 C3 7.5 3.4 5.5 4 3.5Z" fill="#77787b"/><rect x="2.8" y="14" width="2.4" height="2" fill="#d8d8d8" stroke="#161618" stroke-width="0.5"/><path d="M0.3 18 C0.8 16 2.4 15.8 4 15.8 C5.6 15.8 7.2 16 7.7 18Z" fill="#0a0a0a"/></svg>
<svg style="position:absolute;left:1428.8px;top:460.1px;z-index:2;" width="12" height="16" viewBox="0 0 12 16"><path d="M3.6 1 H1.2 V14.6 H3.6 M0 7.8 H3.6" fill="none" stroke="#111" stroke-width="1.1"/><rect x="6.6" y="0.2" width="3.2" height="3.2" fill="#c8c8c8" stroke="#111" stroke-width="1"/><rect x="6.6" y="6.2" width="3.2" height="3.2" fill="#c8c8c8" stroke="#111" stroke-width="1"/><rect x="6.6" y="12" width="3.2" height="3.2" fill="#c8c8c8" stroke="#111" stroke-width="1"/></svg>
<div class="t" style="left:1442.8px;top:459.6px;height:15px;line-height:15px;font-size:11px;color:#e8e8e8;font-weight:bold;"><span style="display:inline-block;transform:scaleX(0.7708);transform-origin:0 50%">サブツール[操作]</span></div>
<div style="left:1512px;top:458.6px;width:28px;height:14px;background:linear-gradient(#6d6e71,#636467);border:1px solid #3e3e41;border-bottom:none;"></div>
<div style="left:1540px;top:458.6px;width:28px;height:14px;background:linear-gradient(#6d6e71,#636467);border:1px solid #3e3e41;border-bottom:none;"></div>
<svg style="position:absolute;left:1520px;top:459.6px;" width="12" height="12" viewBox="0 0 12 12"><circle cx="6" cy="1.8" r="1.6" fill="#5a5a5d"/><path d="M0 4.5H12M6 3V12" stroke="#5a5a5d" stroke-width="2"/></svg>
<div style="left:1544px;top:459.6px;width:21px;height:13px;background:#3e3e41;"></div>
<svg style="position:absolute;left:1545px;top:460.6px;" width="19" height="12" viewBox="0 0 19 12"><path d="M5 11 C1 11 1 5 5 5 C6 1 12 1 13 4.5 C17 4 18 11 14 11Z" fill="none" stroke="#cfcfd2" stroke-width="1.8"/><path d="M7 11 L7 6 M5 8 L7 5.5 L9.5 8" stroke="#cfcfd2" stroke-width="1.5" fill="none"/></svg>
<div style="left:1398px;top:472.6px;width:199px;height:6px;background:#77787c;"></div>
<div style="left:1398px;top:478.2px;width:195px;height:27.8px;background:#7b7c80;border:1px solid #4b4c4f;border-top:1.5px solid #3c3d40;"></div>
<div style="left:1399px;top:480px;width:149px;height:24px;background:linear-gradient(#8aa9b9,#69899a);border:1px solid #3f4a52;border-radius:3px;"></div>
<svg style="position:absolute;left:1402px;top:481px;" width="21" height="20" viewBox="0 0 21 20"><path d="M1 5 L5 1 H15 V11 L11 15 H1Z" fill="#f2f2f2" stroke="#555" stroke-width="1"/><path d="M1 5 H11 V15 M11 5 L15 1 M5 1 V11 H15 M5 11 L1 15" fill="none" stroke="#777" stroke-width="0.7"/><path d="M12 8 L19 14.5 L16 14.5 L17.8 18.5 L16 19.3 L14.2 15.5 L12 17.5Z" fill="#1a1a1c" stroke="#f4f4f4" stroke-width="0.7"/></svg>
<div class="t" style="left:1424.4px;top:484px;height:15px;line-height:15px;font-size:12px;color:#ffffff;"><span style="display:inline-block;transform:scaleX(1.0375);transform-origin:0 50%">操作</span></div>
<div style="left:1398px;top:506px;width:195px;height:160px;background:#7b7c80;border:1px solid #4b4c4f;"></div>
<div style="left:1580px;top:507px;width:12px;height:158px;background:#68696c;border-left:1px solid #5a5b5e;"></div>
<div style="left:1594px;top:479px;width:1px;height:187px;background:#3e3f42;"></div>
<div style="left:1595px;top:479px;width:1px;height:187px;background:#6e6f72;"></div>
<div style="left:1596px;top:479px;width:1px;height:187px;background:#3e3f42;"></div>
<div style="left:1597px;top:479px;width:1px;height:187px;background:#6e6f72;"></div>
<div style="left:1399px;top:507px;width:181px;height:36px;background:linear-gradient(#8aa9b9,#64879a);border-bottom:1px solid #3f4a52;"></div>
<div style="left:1522px;top:526px;width:57px;height:15px;background:rgba(110,130,142,0.55);"></div>
<div class="t" style="left:1479.8px;top:526px;height:15px;line-height:15px;font-size:12px;color:#f8f8f8;width:97px;text-align:right;"><span style="display:inline-block;transform:scaleX(0.7278);transform-origin:100% 50%">オブジェクト</span></div>
<div style="left:1399px;top:578px;width:181px;height:1px;background:#4a4b4e;"></div>
<div class="t" style="left:1479.8px;top:562px;height:15px;line-height:15px;font-size:12px;color:#f8f8f8;width:97px;text-align:right;"><span style="display:inline-block;transform:scaleX(0.8611);transform-origin:100% 50%">レイヤー選択</span></div>
<div style="left:1399px;top:614px;width:181px;height:1px;background:#4a4b4e;"></div>
<div class="t" style="left:1479.8px;top:598px;height:15px;line-height:15px;font-size:12px;color:#f8f8f8;width:97px;text-align:right;"><span style="display:inline-block;transform:scaleX(0.7667);transform-origin:100% 50%">ライトテーブル</span></div>
<div style="left:1399px;top:650px;width:181px;height:1px;background:#4a4b4e;"></div>
<div class="t" style="left:1479.8px;top:634px;height:15px;line-height:15px;font-size:12px;color:#f8f8f8;width:97px;text-align:right;"><span style="display:inline-block;transform:scaleX(0.8125);transform-origin:100% 50%">タイムライン編集</span></div>
<svg style="position:absolute;left:1402px;top:510px;" width="21" height="20" viewBox="0 0 21 20"><path d="M1 5 L5 1 H15 V11 L11 15 H1Z" fill="#f2f2f2" stroke="#555" stroke-width="1"/><path d="M1 5 H11 V15 M11 5 L15 1 M5 1 V11 H15 M5 11 L1 15" fill="none" stroke="#777" stroke-width="0.7"/><path d="M12 8 L19 14.5 L16 14.5 L17.8 18.5 L16 19.3 L14.2 15.5 L12 17.5Z" fill="#1a1a1c" stroke="#f4f4f4" stroke-width="0.7"/></svg>
<svg style="position:absolute;left:1402px;top:548px;" width="20" height="16" viewBox="0 0 20 16"><path d="M0 8 L7 3 L13 8 L7 15Z" fill="#f4f4f4" stroke="#666" stroke-width="0.6"/><path d="M9 8 L19 1 L16 6 L20 6 L15 8 L19 10 L14 10Z" fill="#1e1e20" stroke="#ddd" stroke-width="0.5"/></svg>
<svg style="position:absolute;left:1406px;top:583px;" width="11" height="18" viewBox="0 0 11 18"><rect x="3.5" y="0" width="4" height="5" fill="#bbb"/><path d="M3.5 5 C0 8 0 15 5.5 17 C11 15 11 8 7.5 5Z" fill="#f0f0f0" stroke="#888" stroke-width="0.7"/><path d="M2 13 C4 15 7 15 9 13" stroke="#999" fill="none"/></svg>
<div style="left:1404px;top:622px;width:16px;height:11px;background:#e4e4e6;border:1px solid #777;"></div>
<div style="left:1407px;top:623px;width:1px;height:9px;background:#a0a0a4;"></div>
<div style="left:1410px;top:623px;width:1px;height:9px;background:#a0a0a4;"></div>
<div style="left:1413px;top:623px;width:1px;height:9px;background:#a0a0a4;"></div>
<div style="left:1415px;top:624px;width:2px;height:2px;background:#3030a0;"></div>
<div style="left:1415px;top:629px;width:2px;height:2px;background:#3030a0;"></div>
<svg style="position:absolute;left:1535px;top:668px;" width="16" height="16" viewBox="0 0 16 16"><path d="M4 1 H9 V6 H4Z M2 6 H11 V15 H2Z M9 10H15V15H9Z" fill="#9a9b9e" stroke="#2a2a2c" stroke-width="1.2"/></svg>
<svg style="position:absolute;left:1556px;top:668px;" width="15" height="16" viewBox="0 0 15 16"><path d="M0.5 0.5 H13.5 V10 L9 15 H0.5Z" fill="#f8f8f8" stroke="#333" stroke-width="1"/><path d="M13.5 10 H9 V15" fill="#bbb" stroke="#333" stroke-width="0.8"/></svg>
<svg style="position:absolute;left:1575px;top:667px;" width="16" height="18" viewBox="0 0 16 18"><path d="M1.5 6 H14.5 L13 17 H3Z" fill="#f2f2f2" stroke="#2a2a2c" stroke-width="1.1"/><ellipse cx="8" cy="5.5" rx="7" ry="2" fill="#f2f2f2" stroke="#2a2a2c" stroke-width="1"/><path d="M4 4.5 C4 0.5 12 0.5 12 4.5" fill="none" stroke="#2a2a2c" stroke-width="1.2"/><path d="M5.5 9V15M8 9V15M10.5 9V15" stroke="#2a2a2c" stroke-width="0.8"/></svg>
<div style="left:1398px;top:687.2px;width:199px;height:1.1px;background:#8a8b8e;"></div>
<div style="left:1398px;top:688.4px;width:199px;height:16px;background:linear-gradient(#47474a,#5a5a5d);border-top:1px solid #38383a;"></div>
<div style="left:1398px;top:689.4px;width:19px;height:15px;background:linear-gradient(#5c5c5f,#4e4e51);border-right:1px solid #3c3c3e;border-bottom:1px solid #404043;"></div>
<svg style="position:absolute;left:1402.5px;top:692.9px;" width="10" height="8" viewBox="0 0 10 8"><path d="M0 0 L3.4 4 L0 8 Z" fill="#7f8084"/><path d="M4.5 1h5M4.5 4h5M4.5 7h5" stroke="#7f8084" stroke-width="1.4"/></svg>
<div style="left:1417px;top:689.4px;width:75px;height:18px;background:linear-gradient(#86878b,#7b7c80 60%);border-top:1px solid #4a4a4d;"></div>
<svg style="position:absolute;left:1421px;top:690.4px;z-index:2;" width="8" height="18" viewBox="0 0 8 18"><path d="M4 0.3 C5 3 6.6 6 6.6 9.5 C6.6 12 5.6 13.5 5.2 14.5 L2.8 14.5 C2.4 13.5 1.4 12 1.4 9.5 C1.4 6 3 3 4 0.3Z" fill="#ececec" stroke="#161618" stroke-width="1"/><path d="M4 3.5 C4.6 5.5 5 7.5 5 10 L4.3 13.5 L3.7 13.5 L3 10 C3 7.5 3.4 5.5 4 3.5Z" fill="#77787b"/><rect x="2.8" y="14" width="2.4" height="2" fill="#d8d8d8" stroke="#161618" stroke-width="0.5"/><path d="M0.3 18 C0.8 16 2.4 15.8 4 15.8 C5.6 15.8 7.2 16 7.7 18Z" fill="#0a0a0a"/></svg>
<svg style="position:absolute;left:1428.8px;top:691.9px;z-index:2;" width="12" height="17" viewBox="0 0 12 17"><path d="M3.6 1 H1.2 V14.6 H3.6 M0 7.8 H3.6" fill="none" stroke="#111" stroke-width="1.1"/><circle cx="7.7" cy="1.6" r="1.4" fill="#111"/><circle cx="7.7" cy="7.8" r="2" fill="#111"/><circle cx="7.7" cy="14.2" r="2.6" fill="#111"/></svg>
<div class="t" style="left:1442.8px;top:691.4px;height:15px;line-height:15px;font-size:11px;color:#e8e8e8;font-weight:bold;"><span style="display:inline-block;transform:scaleX(0.6939);transform-origin:0 50%">ブラシサイズ</span></div>
<div style="left:1398px;top:704.4px;width:199px;height:6px;background:#77787c;"></div>
<div style="left:1398px;top:710px;width:199px;height:130px;background:#7b7c80;border:1px solid #4b4c4f;border-top:2px solid #48494c;"></div>
<svg style="position:absolute;left:0px;top:0px;clip-path:inset(711px 17px 0 1399px);" width="1600" height="839" viewBox="0 0 1600 839"><circle cx="1414.0" cy="727.2" r="0.4" fill="#66676a"/><circle cx="1445.0" cy="727.2" r="0.5" fill="#66676a"/><circle cx="1476.0" cy="727.2" r="0.5" fill="#66676a"/><circle cx="1506.5" cy="727.2" r="0.6" fill="#66676a"/><circle cx="1537.0" cy="727.2" r="0.8" fill="#66676a"/><circle cx="1567.5" cy="727.2" r="1.0" fill="#66676a"/><circle cx="1414.0" cy="766.2" r="1.3" fill="#5a5b5e"/><circle cx="1445.0" cy="766.2" r="1.7" fill="#5a5b5e"/><circle cx="1476.0" cy="766.2" r="2.2" fill="#5a5b5e"/><circle cx="1506.5" cy="766.2" r="2.6" fill="#5a5b5e"/><circle cx="1537.0" cy="766.2" r="3.1" fill="#5a5b5e"/><circle cx="1567.5" cy="766.2" r="4.0" fill="#5a5b5e"/><circle cx="1414.0" cy="806.2" r="5.2" fill="#5a5b5e"/><circle cx="1445.0" cy="806.2" r="6.6" fill="#5a5b5e"/><circle cx="1476.0" cy="806.2" r="7.6" fill="#5a5b5e"/><circle cx="1506.5" cy="806.2" r="9.0" fill="#5a5b5e"/><circle cx="1537.0" cy="806.2" r="11.2" fill="#5a5b5e"/><circle cx="1567.5" cy="806.2" r="11.6" fill="#5a5b5e"/><ellipse cx="1414.0" cy="844" rx="9.0" ry="8" fill="#58595c"/><ellipse cx="1445.0" cy="844" rx="9.3" ry="8" fill="#58595c"/><ellipse cx="1476.0" cy="844" rx="9.6" ry="8" fill="#58595c"/><ellipse cx="1506.5" cy="844" rx="9.9" ry="8" fill="#58595c"/><ellipse cx="1537.0" cy="844" rx="10.2" ry="8" fill="#58595c"/><ellipse cx="1567.5" cy="844" rx="10.5" ry="8" fill="#58595c"/></svg>
<div style="left:1399px;top:814.3px;width:184px;height:16px;background:rgba(123,124,128,0.78);"></div>
<div style="left:1429px;top:712px;width:1px;height:127px;background:#5c5d60;"></div>
<div style="left:1460px;top:712px;width:1px;height:127px;background:#5c5d60;"></div>
<div style="left:1491px;top:712px;width:1px;height:127px;background:#5c5d60;"></div>
<div style="left:1521px;top:712px;width:1px;height:127px;background:#5c5d60;"></div>
<div style="left:1552px;top:712px;width:1px;height:127px;background:#5c5d60;"></div>
<div style="left:1399px;top:750px;width:184px;height:1px;background:#5c5d60;"></div>
<div style="left:1399px;top:790px;width:184px;height:1px;background:#5c5d60;"></div>
<div style="left:1399px;top:830px;width:184px;height:1px;background:#5c5d60;"></div>
<div class="t" style="left:1399px;top:734px;height:15px;line-height:15px;font-size:13px;color:#d0d0d3;width:30px;text-align:center;"><span style="display:inline-block;transform:scaleX(0.8138);transform-origin:50% 50%">0.07</span></div>
<div class="t" style="left:1430px;top:734px;height:15px;line-height:15px;font-size:13px;color:#d0d0d3;width:30px;text-align:center;"><span style="display:inline-block;transform:scaleX(0.8076);transform-origin:50% 50%">0.1</span></div>
<div class="t" style="left:1461px;top:734px;height:15px;line-height:15px;font-size:13px;color:#d0d0d3;width:30px;text-align:center;"><span style="display:inline-block;transform:scaleX(0.8138);transform-origin:50% 50%">0.15</span></div>
<div class="t" style="left:1492px;top:734px;height:15px;line-height:15px;font-size:13px;color:#d0d0d3;width:29px;text-align:center;"><span style="display:inline-block;transform:scaleX(0.8076);transform-origin:50% 50%">0.2</span></div>
<div class="t" style="left:1522px;top:734px;height:15px;line-height:15px;font-size:13px;color:#d0d0d3;width:30px;text-align:center;"><span style="display:inline-block;transform:scaleX(0.8138);transform-origin:50% 50%">0.25</span></div>
<div class="t" style="left:1553px;top:734px;height:15px;line-height:15px;font-size:13px;color:#d0d0d3;width:29px;text-align:center;"><span style="display:inline-block;transform:scaleX(0.8076);transform-origin:50% 50%">0.3</span></div>
<div class="t" style="left:1399px;top:773px;height:15px;line-height:15px;font-size:13px;color:#d0d0d3;width:30px;text-align:center;"><span style="display:inline-block;transform:scaleX(0.8076);transform-origin:50% 50%">0.4</span></div>
<div class="t" style="left:1430px;top:773px;height:15px;line-height:15px;font-size:13px;color:#d0d0d3;width:30px;text-align:center;"><span style="display:inline-block;transform:scaleX(0.8076);transform-origin:50% 50%">0.5</span></div>
<div class="t" style="left:1461px;top:773px;height:15px;line-height:15px;font-size:13px;color:#d0d0d3;width:30px;text-align:center;"><span style="display:inline-block;transform:scaleX(0.8076);transform-origin:50% 50%">0.6</span></div>
<div class="t" style="left:1492px;top:773px;height:15px;line-height:15px;font-size:13px;color:#d0d0d3;width:29px;text-align:center;"><span style="display:inline-block;transform:scaleX(0.8076);transform-origin:50% 50%">0.7</span></div>
<div class="t" style="left:1522px;top:773px;height:15px;line-height:15px;font-size:13px;color:#d0d0d3;width:30px;text-align:center;"><span style="display:inline-block;transform:scaleX(0.8076);transform-origin:50% 50%">0.8</span></div>
<div class="t" style="left:1553px;top:773px;height:15px;line-height:15px;font-size:13px;color:#d0d0d3;width:29px;text-align:center;"><span style="display:inline-block;transform:scaleX(1.0229);transform-origin:50% 50%">1</span></div>
<div class="t" style="left:1399px;top:813px;height:15px;line-height:15px;font-size:13px;color:#d0d0d3;width:30px;text-align:center;"><span style="display:inline-block;transform:scaleX(0.8076);transform-origin:50% 50%">1.2</span></div>
<div class="t" style="left:1430px;top:813px;height:15px;line-height:15px;font-size:13px;color:#d0d0d3;width:30px;text-align:center;"><span style="display:inline-block;transform:scaleX(0.8076);transform-origin:50% 50%">1.5</span></div>
<div class="t" style="left:1461px;top:813px;height:15px;line-height:15px;font-size:13px;color:#d0d0d3;width:30px;text-align:center;"><span style="display:inline-block;transform:scaleX(0.8076);transform-origin:50% 50%">1.7</span></div>
<div class="t" style="left:1492px;top:813px;height:15px;line-height:15px;font-size:13px;color:#d0d0d3;width:29px;text-align:center;"><span style="display:inline-block;transform:scaleX(1.0229);transform-origin:50% 50%">2</span></div>
<div class="t" style="left:1522px;top:813px;height:15px;line-height:15px;font-size:13px;color:#d0d0d3;width:30px;text-align:center;"><span style="display:inline-block;transform:scaleX(0.8076);transform-origin:50% 50%">2.5</span></div>
<div class="t" style="left:1553px;top:813px;height:15px;line-height:15px;font-size:13px;color:#d0d0d3;width:29px;text-align:center;"><span style="display:inline-block;transform:scaleX(1.0229);transform-origin:50% 50%">3</span></div>
<div style="left:1585px;top:712px;width:11px;height:127px;background:#68696c;border-left:1px solid #5a5b5e;"></div>
<div style="left:1585px;top:712px;width:11px;height:11px;background:linear-gradient(#838488,#747578);border:1px solid #9a9b9e;border-right-color:#68696c;border-bottom-color:#68696c;border-radius:2px;"></div>
<svg style="position:absolute;left:1587.7px;top:716px;" width="5.6" height="3.2" viewBox="0 0 5.6 3.2"><path d="M0 3.2 L2.8 0 L5.6 3.2 Z" fill="#2e2e31"/></svg>
<div style="left:1585px;top:828px;width:11px;height:11px;background:linear-gradient(#838488,#747578);border:1px solid #9a9b9e;border-right-color:#68696c;border-bottom-color:#68696c;border-radius:2px;"></div>
<svg style="position:absolute;left:1587.7px;top:832px;" width="5.6" height="3.2" viewBox="0 0 5.6 3.2"><path d="M0 0 L5.6 0 L2.8 3.2 Z" fill="#2e2e31"/></svg>
<div style="left:1585px;top:724px;width:11px;height:54px;background:linear-gradient(90deg,#898a8e,#77787c);border:1px solid #5c5d60;border-left-color:#a0a1a4;border-top-color:#a0a1a4;border-radius:2px;"></div>
<div style="left:1588px;top:749px;width:5px;height:1px;background:#4f5053;"></div>
<div style="left:1588px;top:751px;width:5px;height:1px;background:#4f5053;"></div>
<div style="left:1588px;top:753px;width:5px;height:1px;background:#4f5053;"></div>
<div style="left:1398px;top:841.2px;width:199px;height:1.1px;background:#8a8b8e;"></div>
<div style="left:1398px;top:842.6px;width:199px;height:16px;background:linear-gradient(#47474a,#5a5a5d);border-top:1px solid #38383a;"></div>
<div style="left:1398px;top:843.6px;width:19px;height:15px;background:linear-gradient(#5c5c5f,#4e4e51);border-right:1px solid #3c3c3e;border-bottom:1px solid #404043;"></div>
<svg style="position:absolute;left:1402.5px;top:847.1px;" width="10" height="8" viewBox="0 0 10 8"><path d="M0 0 L3.4 4 L0 8 Z" fill="#7f8084"/><path d="M4.5 1h5M4.5 4h5M4.5 7h5" stroke="#7f8084" stroke-width="1.4"/></svg>
<div style="left:1417px;top:843.6px;width:40px;height:18px;background:linear-gradient(#86878b,#7b7c80 60%);border-top:1px solid #4a4a4d;"></div>
<div style="left:1422.0px;top:846.6px;width:5.3px;height:5px;background:#1860d0;"></div>
<div style="left:1427.3px;top:846.6px;width:5.3px;height:5px;background:#101060;"></div>
<div style="left:1432.6px;top:846.6px;width:5.3px;height:5px;background:#c01848;"></div>
<div style="left:1422.0px;top:851.6px;width:5.3px;height:5px;background:#d01010;"></div>
<div style="left:1427.3px;top:851.6px;width:5.3px;height:5px;background:#f0f0f0;"></div>
<div style="left:1432.6px;top:851.6px;width:5.3px;height:5px;background:#f0e020;"></div>
<div style="left:1422.0px;top:856.6px;width:5.3px;height:5px;background:#30a020;"></div>
<div style="left:1427.3px;top:856.6px;width:5.3px;height:5px;background:#106010;"></div>
<div style="left:1432.6px;top:856.6px;width:5.3px;height:5px;background:#000;"></div>
<div style="left:1426.4px;top:850.6px;width:7.4px;height:7px;border:1px solid #e83030;background:#a01020;"></div>
<div style="left:1428.4px;top:852.6px;width:3.4px;height:3px;background:#10206c;"></div>
<div class="t" style="left:1442.7px;top:845.6px;height:15px;line-height:15px;font-size:11px;color:#e0e0e0;"><span style="display:inline-block;transform:scaleX(0.9091);transform-origin:0 50%">カ</span></div>
<div style="left:1457px;top:844.6px;width:28px;height:14px;background:linear-gradient(#6d6e71,#636467);border:1px solid #3e3e41;border-bottom:none;"></div>
<div style="left:1485px;top:844.6px;width:28px;height:14px;background:linear-gradient(#6d6e71,#636467);border:1px solid #3e3e41;border-bottom:none;"></div>
<div style="left:1513px;top:844.6px;width:28px;height:14px;background:linear-gradient(#6d6e71,#636467);border:1px solid #3e3e41;border-bottom:none;"></div>
<div style="left:1541px;top:844.6px;width:28px;height:14px;background:linear-gradient(#6d6e71,#636467);border:1px solid #3e3e41;border-bottom:none;"></div>
<div style="left:1569px;top:844.6px;width:28px;height:14px;background:linear-gradient(#6d6e71,#636467);border:1px solid #3e3e41;border-bottom:none;"></div>
<div style="left:1464px;top:846.6px;width:14px;height:11px;background:radial-gradient(circle at 50% 70%,#8a8b8e,#4e4f52);border-radius:7px 7px 0 0;"></div>
<div style="left:1491px;top:846.6px;width:17px;height:10px;background:linear-gradient(#5a5b5e 0 25%,#88898c 25% 50%,#5a5b5e 50% 75%,#88898c 75%);"></div>
<svg style="position:absolute;left:1519px;top:846.6px;" width="16" height="12" viewBox="0 0 16 12"><rect x="1" y="0" width="5" height="5" fill="#555659"/><rect x="10" y="0" width="5" height="5" fill="#555659"/><rect x="5.5" y="7" width="5" height="5" fill="#555659"/><path d="M3.5 5V6.5H12.5V5M8 6.5V7" stroke="#555659" fill="none"/></svg>
<svg style="position:absolute;left:1547px;top:846.6px;" width="16" height="12" viewBox="0 0 16 12"><path d="M2 12 L4 3 L8 1 L8 12Z" fill="#48494c"/><rect x="6" y="3" width="10" height="9" fill="#707174"/><rect x="6" y="1" width="10" height="3" fill="#505154"/></svg>
<svg style="position:absolute;left:1575px;top:847.6px;" width="16" height="10" viewBox="0 0 16 10"><rect x="0.5" y="0.5" width="15" height="9" fill="#77787b" stroke="#48494c"/><path d="M3 0V10M13 0V10" stroke="#48494c"/><path d="M3 5H13" stroke="#48494c"/></svg>
<div style="left:1398px;top:858.6px;width:199px;height:6px;background:#77787c;"></div>
<div style="left:1399px;top:865px;width:147px;height:18px;background:linear-gradient(#808185,#66676a);border:1px solid #4c4d50;border-radius:3px;box-shadow:inset 0 1px 0 #919296;"></div>
<div class="t" style="left:1399px;top:867px;height:15px;line-height:15px;font-size:12px;color:#f8f8f8;width:133.3px;text-align:center;"><span style="display:inline-block;transform:scaleX(0.7969);transform-origin:50% 50%">標準カラーセット</span></div>
<svg style="position:absolute;left:1535px;top:872px;" width="9" height="5" viewBox="0 0 9 5"><path d="M0 0 L9 0 L4.5 5 Z" fill="#3f4043"/></svg>
<svg style="position:absolute;left:1550px;top:865px;" width="17" height="19" viewBox="0 0 17 19"><path d="M4 1 C1 3 1 8 5.5 9.5 V17 C5.5 19 10.5 19 10.5 17 V9.5 C15 8 15 3 12 1 V6 H4Z" fill="#eee" stroke="#1e1e20" stroke-width="1.3"/><path d="M-1 3 L3 5 L2 12Z" fill="#8e8f92"/></svg>
<svg style="position:absolute;left:1569px;top:865px;" width="16" height="17" viewBox="0 0 16 17"><path d="M4 2 H9 V6 H4Z M2 6 H11 V16 H2Z M9 10H15V16H9Z" fill="#9a9b9e" stroke="#1a1a1c" stroke-width="1.3"/><path d="M2 8H11" stroke="#1a1a1c" stroke-width="2"/><rect x="10.5" y="11.5" width="3" height="3" fill="#eee"/></svg>
<div style="left:1398px;top:884px;width:189px;height:129px;background:#7b7c80;border:1px solid #4b4c4f;border-top:2px solid #48494c;"></div>
<div style="left:1575px;top:886px;width:11px;height:126px;background:#68696c;border-left:1px solid #5a5b5e;"></div>
<div style="left:1588.4px;top:864px;width:1px;height:169px;background:#3e3f42;"></div>
<div style="left:1589.4px;top:864px;width:1px;height:169px;background:#6e6f72;"></div>
<div style="left:1590.4px;top:864px;width:1px;height:169px;background:#3e3f42;"></div>
<div style="left:1591.4px;top:864px;width:1px;height:169px;background:#6e6f72;"></div>
<div style="left:1592.4px;top:864px;width:1px;height:169px;background:#3e3f42;"></div>
<div style="left:1593.4px;top:864px;width:1px;height:169px;background:#6e6f72;"></div>
<div style="left:1594.4px;top:864px;width:1px;height:169px;background:#3e3f42;"></div>
<div style="left:1595.4px;top:864px;width:1px;height:169px;background:#6e6f72;"></div>
<div style="left:1596.4px;top:864px;width:1px;height:169px;background:#3e3f42;"></div>
<div style="left:1597.4px;top:864px;width:1px;height:169px;background:#6e6f72;"></div>
<div style="left:1400.0px;top:885.8px;width:9.7px;height:9.1px;background:#000000;"></div>
<div style="left:1410.9px;top:885.8px;width:9.7px;height:9.1px;background:#ffffff;"></div>
<div style="left:1421.9px;top:885.8px;width:9.7px;height:9.1px;background:#d9b896;"></div>
<div style="left:1432.8px;top:885.8px;width:9.7px;height:9.1px;background:#6b1c24;"></div>
<div style="left:1443.7px;top:885.8px;width:9.7px;height:9.1px;background:conic-gradient(#fff 25%,#8a8a8a 0 50%,#fff 0 75%,#8a8a8a 0) 0 0/6.4px 6px;"></div>
<div style="left:1454.7px;top:885.8px;width:9.7px;height:9.1px;background:#0c0c0c;"></div>
<div style="left:1465.6px;top:885.8px;width:9.7px;height:9.1px;background:#1c1c1c;"></div>
<div style="left:1476.5px;top:885.8px;width:9.7px;height:9.1px;background:#282828;"></div>
<div style="left:1487.4px;top:885.8px;width:9.7px;height:9.1px;background:#383838;"></div>
<div style="left:1498.4px;top:885.8px;width:9.7px;height:9.1px;background:#505050;"></div>
<div style="left:1509.3px;top:885.8px;width:9.7px;height:9.1px;background:#686868;"></div>
<div style="left:1520.2px;top:885.8px;width:9.7px;height:9.1px;background:#808080;"></div>
<div style="left:1531.2px;top:885.8px;width:9.7px;height:9.1px;background:#989898;"></div>
<div style="left:1542.1px;top:885.8px;width:9.7px;height:9.1px;background:#b0b0b0;"></div>
<div style="left:1553.0px;top:885.8px;width:9.7px;height:9.1px;background:#c8c8c8;"></div>
<div style="left:1564.0px;top:885.8px;width:9.7px;height:9.1px;background:#dcdcdc;"></div>
<div style="left:1400.0px;top:895.8px;width:9.7px;height:9.1px;background:#e4e4e4;"></div>
<div style="left:1410.9px;top:895.8px;width:9.7px;height:9.1px;background:#f0f0f0;"></div>
<div style="left:1421.9px;top:895.8px;width:9.7px;height:9.1px;background:#ff0000;"></div>
<div style="left:1432.8px;top:895.8px;width:9.7px;height:9.1px;background:#ffff00;"></div>
<div style="left:1443.7px;top:895.8px;width:9.7px;height:9.1px;background:#00ff00;"></div>
<div style="left:1454.7px;top:895.8px;width:9.7px;height:9.1px;background:#00ffff;"></div>
<div style="left:1465.6px;top:895.8px;width:9.7px;height:9.1px;background:#0000ff;"></div>
<div style="left:1476.5px;top:895.8px;width:9.7px;height:9.1px;background:#ff00ff;"></div>
<div style="left:1487.4px;top:895.8px;width:9.7px;height:9.1px;background:#28282c;"></div>
<div style="left:1498.4px;top:895.8px;width:9.7px;height:9.1px;background:#484c58;"></div>
<div style="left:1509.3px;top:895.8px;width:9.7px;height:9.1px;background:#7890b0;"></div>
<div style="left:1520.2px;top:895.8px;width:9.7px;height:9.1px;background:#a8b4d0;"></div>
<div style="left:1531.2px;top:895.8px;width:9.7px;height:9.1px;background:#c8d0e8;"></div>
<div style="left:1542.1px;top:895.8px;width:9.7px;height:9.1px;background:#383430;"></div>
<div style="left:1553.0px;top:895.8px;width:9.7px;height:9.1px;background:#5c5048;"></div>
<div style="left:1564.0px;top:895.8px;width:9.7px;height:9.1px;background:#786858;"></div>
<div style="left:1400.0px;top:905.9px;width:9.7px;height:9.1px;background:#c09888;"></div>
<div style="left:1410.9px;top:905.9px;width:9.7px;height:9.1px;background:#c8a898;"></div>
<div style="left:1421.9px;top:905.9px;width:9.7px;height:9.1px;background:#ff9090;"></div>
<div style="left:1432.8px;top:905.9px;width:9.7px;height:9.1px;background:#ffb090;"></div>
<div style="left:1443.7px;top:905.9px;width:9.7px;height:9.1px;background:#ffd890;"></div>
<div style="left:1454.7px;top:905.9px;width:9.7px;height:9.1px;background:#ffff90;"></div>
<div style="left:1465.6px;top:905.9px;width:9.7px;height:9.1px;background:#c8ff90;"></div>
<div style="left:1476.5px;top:905.9px;width:9.7px;height:9.1px;background:#90ff98;"></div>
<div style="left:1487.4px;top:905.9px;width:9.7px;height:9.1px;background:#90ffe0;"></div>
<div style="left:1498.4px;top:905.9px;width:9.7px;height:9.1px;background:#90d8ff;"></div>
<div style="left:1509.3px;top:905.9px;width:9.7px;height:9.1px;background:#90b8ff;"></div>
<div style="left:1520.2px;top:905.9px;width:9.7px;height:9.1px;background:#9898ff;"></div>
<div style="left:1531.2px;top:905.9px;width:9.7px;height:9.1px;background:#b890ff;"></div>
<div style="left:1542.1px;top:905.9px;width:9.7px;height:9.1px;background:#e090ff;"></div>
<div style="left:1553.0px;top:905.9px;width:9.7px;height:9.1px;background:#ff90e8;"></div>
<div style="left:1564.0px;top:905.9px;width:9.7px;height:9.1px;background:#ff90b8;"></div>
<div style="left:1400.0px;top:915.9px;width:9.7px;height:9.1px;background:#f8e0d8;"></div>
<div style="left:1410.9px;top:915.9px;width:9.7px;height:9.1px;background:#ffe0d0;"></div>
<div style="left:1421.9px;top:915.9px;width:9.7px;height:9.1px;background:#f05050;"></div>
<div style="left:1432.8px;top:915.9px;width:9.7px;height:9.1px;background:#f08850;"></div>
<div style="left:1443.7px;top:915.9px;width:9.7px;height:9.1px;background:#f0b848;"></div>
<div style="left:1454.7px;top:915.9px;width:9.7px;height:9.1px;background:#e8e850;"></div>
<div style="left:1465.6px;top:915.9px;width:9.7px;height:9.1px;background:#98e850;"></div>
<div style="left:1476.5px;top:915.9px;width:9.7px;height:9.1px;background:#50e868;"></div>
<div style="left:1487.4px;top:915.9px;width:9.7px;height:9.1px;background:#50e8c0;"></div>
<div style="left:1498.4px;top:915.9px;width:9.7px;height:9.1px;background:#48b0f0;"></div>
<div style="left:1509.3px;top:915.9px;width:9.7px;height:9.1px;background:#4888f0;"></div>
<div style="left:1520.2px;top:915.9px;width:9.7px;height:9.1px;background:#5858f0;"></div>
<div style="left:1531.2px;top:915.9px;width:9.7px;height:9.1px;background:#8848e8;"></div>
<div style="left:1542.1px;top:915.9px;width:9.7px;height:9.1px;background:#c048e8;"></div>
<div style="left:1553.0px;top:915.9px;width:9.7px;height:9.1px;background:#f048c8;"></div>
<div style="left:1564.0px;top:915.9px;width:9.7px;height:9.1px;background:#f04888;"></div>
<div style="left:1400.0px;top:925.9px;width:9.7px;height:9.1px;background:#f8dcd4;"></div>
<div style="left:1410.9px;top:925.9px;width:9.7px;height:9.1px;background:#ffd8c8;"></div>
<div style="left:1421.9px;top:925.9px;width:9.7px;height:9.1px;background:#f02030;"></div>
<div style="left:1432.8px;top:925.9px;width:9.7px;height:9.1px;background:#ff6000;"></div>
<div style="left:1443.7px;top:925.9px;width:9.7px;height:9.1px;background:#ffa000;"></div>
<div style="left:1454.7px;top:925.9px;width:9.7px;height:9.1px;background:#ffe800;"></div>
<div style="left:1465.6px;top:925.9px;width:9.7px;height:9.1px;background:#78f010;"></div>
<div style="left:1476.5px;top:925.9px;width:9.7px;height:9.1px;background:#20e040;"></div>
<div style="left:1487.4px;top:925.9px;width:9.7px;height:9.1px;background:#10f0b0;"></div>
<div style="left:1498.4px;top:925.9px;width:9.7px;height:9.1px;background:#10a0ff;"></div>
<div style="left:1509.3px;top:925.9px;width:9.7px;height:9.1px;background:#1060ff;"></div>
<div style="left:1520.2px;top:925.9px;width:9.7px;height:9.1px;background:#0800ff;"></div>
<div style="left:1531.2px;top:925.9px;width:9.7px;height:9.1px;background:#6010f0;"></div>
<div style="left:1542.1px;top:925.9px;width:9.7px;height:9.1px;background:#b010f0;"></div>
<div style="left:1553.0px;top:925.9px;width:9.7px;height:9.1px;background:#f010a0;"></div>
<div style="left:1564.0px;top:925.9px;width:9.7px;height:9.1px;background:#ff1060;"></div>
<div style="left:1400.0px;top:935.9px;width:9.7px;height:9.1px;background:#e8ccc0;"></div>
<div style="left:1410.9px;top:935.9px;width:9.7px;height:9.1px;background:#f0c8b0;"></div>
<div style="left:1421.9px;top:935.9px;width:9.7px;height:9.1px;background:#b03038;"></div>
<div style="left:1432.8px;top:935.9px;width:9.7px;height:9.1px;background:#b86030;"></div>
<div style="left:1443.7px;top:935.9px;width:9.7px;height:9.1px;background:#b88830;"></div>
<div style="left:1454.7px;top:935.9px;width:9.7px;height:9.1px;background:#a8a830;"></div>
<div style="left:1465.6px;top:935.9px;width:9.7px;height:9.1px;background:#70a830;"></div>
<div style="left:1476.5px;top:935.9px;width:9.7px;height:9.1px;background:#30a850;"></div>
<div style="left:1487.4px;top:935.9px;width:9.7px;height:9.1px;background:#30a890;"></div>
<div style="left:1498.4px;top:935.9px;width:9.7px;height:9.1px;background:#3080b0;"></div>
<div style="left:1509.3px;top:935.9px;width:9.7px;height:9.1px;background:#3060b0;"></div>
<div style="left:1520.2px;top:935.9px;width:9.7px;height:9.1px;background:#3838a8;"></div>
<div style="left:1531.2px;top:935.9px;width:9.7px;height:9.1px;background:#6030a8;"></div>
<div style="left:1542.1px;top:935.9px;width:9.7px;height:9.1px;background:#9030a8;"></div>
<div style="left:1553.0px;top:935.9px;width:9.7px;height:9.1px;background:#b03088;"></div>
<div style="left:1564.0px;top:935.9px;width:9.7px;height:9.1px;background:#b03060;"></div>
<div style="left:1400.0px;top:946.0px;width:9.7px;height:9.1px;background:#ffdcc8;"></div>
<div style="left:1410.9px;top:946.0px;width:9.7px;height:9.1px;background:#d8a080;"></div>
<div style="left:1421.9px;top:946.0px;width:9.7px;height:9.1px;background:#682810;"></div>
<div style="left:1432.8px;top:946.0px;width:9.7px;height:9.1px;background:#702810;"></div>
<div style="left:1443.7px;top:946.0px;width:9.7px;height:9.1px;background:#602810;"></div>
<div style="left:1454.7px;top:946.0px;width:9.7px;height:9.1px;background:#604008;"></div>
<div style="left:1465.6px;top:946.0px;width:9.7px;height:9.1px;background:#586008;"></div>
<div style="left:1476.5px;top:946.0px;width:9.7px;height:9.1px;background:#286010;"></div>
<div style="left:1487.4px;top:946.0px;width:9.7px;height:9.1px;background:#106020;"></div>
<div style="left:1498.4px;top:946.0px;width:9.7px;height:9.1px;background:#106048;"></div>
<div style="left:1509.3px;top:946.0px;width:9.7px;height:9.1px;background:#104868;"></div>
<div style="left:1520.2px;top:946.0px;width:9.7px;height:9.1px;background:#102860;"></div>
<div style="left:1531.2px;top:946.0px;width:9.7px;height:9.1px;background:#101068;"></div>
<div style="left:1542.1px;top:946.0px;width:9.7px;height:9.1px;background:#301068;"></div>
<div style="left:1553.0px;top:946.0px;width:9.7px;height:9.1px;background:#480c60;"></div>
<div style="left:1564.0px;top:946.0px;width:9.7px;height:9.1px;background:#600c50;"></div>
<div style="left:1400.0px;top:956.0px;width:9.7px;height:9.1px;background:#581028;"></div>
<div style="left:1410.9px;top:956.0px;width:9.7px;height:9.1px;background:#ffc8a8;"></div>
<div style="left:1421.9px;top:956.0px;width:9.7px;height:9.1px;background:#d09878;"></div>
<div style="left:1432.8px;top:956.0px;width:9.7px;height:9.1px;background:#400808;"></div>
<div style="left:1443.7px;top:956.0px;width:9.7px;height:9.1px;background:#201008;"></div>
<div style="left:1454.7px;top:956.0px;width:9.7px;height:9.1px;background:#302008;"></div>
<div style="left:1465.6px;top:956.0px;width:9.7px;height:9.1px;background:#283008;"></div>
<div style="left:1476.5px;top:956.0px;width:9.7px;height:9.1px;background:#183008;"></div>
<div style="left:1487.4px;top:956.0px;width:9.7px;height:9.1px;background:#083010;"></div>
<div style="left:1498.4px;top:956.0px;width:9.7px;height:9.1px;background:#083028;"></div>
<div style="left:1509.3px;top:956.0px;width:9.7px;height:9.1px;background:#082030;"></div>
<div style="left:1520.2px;top:956.0px;width:9.7px;height:9.1px;background:#081830;"></div>
<div style="left:1531.2px;top:956.0px;width:9.7px;height:9.1px;background:#080830;"></div>
<div style="left:1542.1px;top:956.0px;width:9.7px;height:9.1px;background:#180830;"></div>
<div style="left:1553.0px;top:956.0px;width:9.7px;height:9.1px;background:#280828;"></div>
<div style="left:1564.0px;top:956.0px;width:9.7px;height:9.1px;background:#300820;"></div>
<div style="left:1400.0px;top:966.0px;width:9.7px;height:9.1px;background:#300818;"></div>
<div style="left:1410.9px;top:966.0px;width:9.7px;height:9.1px;background:#f0b898;"></div>
<div style="left:1421.9px;top:966.0px;width:9.7px;height:9.1px;background:#ffd0f0;"></div>
<div style="left:1432.8px;top:966.0px;width:9.7px;height:9.1px;background:#702810;"></div>
<div style="left:1443.7px;top:966.0px;width:9.7px;height:9.1px;background:#c08060;"></div>
<div style="left:1454.7px;top:966.0px;width:9.7px;height:9.1px;background:#206050;"></div>
<div style="left:1465.6px;top:966.0px;width:9.7px;height:9.1px;background:#404850;"></div>
<div style="left:1476.5px;top:966.0px;width:9.7px;height:9.1px;background:#f8c8a0;"></div>
<div style="left:1487.4px;top:966.0px;width:9.7px;height:9.1px;background:#886060;"></div>
<div style="left:1498.4px;top:966.0px;width:9.7px;height:9.1px;background:#c08060;"></div>
<div style="left:1399px;top:1022px;width:8px;height:8px;background:#8c0808;border:1px solid #4a0000;"></div>
<div style="left:1431px;top:1022px;width:8px;height:8px;background:#089008;border:1px solid #004a00;"></div>
<div style="left:1463px;top:1022px;width:8px;height:8px;background:#0808b0;border:1px solid #00004a;"></div>
<svg style="position:absolute;left:1530px;top:1015px;" width="15" height="17" viewBox="0 0 15 17"><path d="M1 1 L5 3 L6 8" stroke="#9a9b9e" stroke-width="2" fill="none"/><path d="M4 9 H14 V16 H4Z" fill="#9a9b9e" stroke="#66676a"/><path d="M4 12.5H14M9 9V16" stroke="#66676a"/></svg>
<svg style="position:absolute;left:1549px;top:1014px;" width="17" height="18" viewBox="0 0 17 18"><path d="M6 0 C8 4 12 7 12 10.5 C12 14 9 16 6 16 C3 16 0 14 0 10.5 C0 7 4 4 6 0Z" fill="#1c1c1e"/><path d="M3 9 C3 7 4 6 5 5" stroke="#bbb" fill="none"/><path d="M12 10V17M8.5 13.5H15.5" stroke="#0c0c0e" stroke-width="2.2"/></svg>
<svg style="position:absolute;left:1569px;top:1014px;" width="16" height="18" viewBox="0 0 16 18"><path d="M1.5 6 H14.5 L13 17 H3Z" fill="#8a8b8e" stroke="#66676a" stroke-width="1.1"/><ellipse cx="8" cy="5.5" rx="7" ry="2" fill="#8a8b8e" stroke="#66676a" stroke-width="1"/><path d="M4 4.5 C4 0.5 12 0.5 12 4.5" fill="none" stroke="#66676a" stroke-width="1.2"/><path d="M5.5 9V15M8 9V15M10.5 9V15" stroke="#66676a" stroke-width="0.8"/></svg>
<div style="left:1597px;top:47px;width:1.2px;height:987px;background:#66676a;"></div>
<div style="left:1598.1px;top:47px;width:1.2px;height:987px;background:#9a9b9e;"></div>
<div style="left:1599.3px;top:47px;width:1px;height:987px;background:#2a2a2c;"></div>
<div style="left:1600px;top:47px;width:319px;height:20px;background:linear-gradient(#69696c,#474749);border-top:1px solid #727275;border-bottom:1px solid #39393b;"></div>
<div style="left:1602.0px;top:53px;width:1px;height:8px;background:#8a8b8e;"></div>
<div style="left:1604.3px;top:53px;width:1px;height:8px;background:#8a8b8e;"></div>
<div style="left:1606.6px;top:53px;width:1px;height:8px;background:#8a8b8e;"></div>
<div style="left:1608.9px;top:53px;width:1px;height:8px;background:#8a8b8e;"></div>
<svg style="position:absolute;left:1885px;top:50.4px;" width="6" height="13.4" viewBox="0 0 6 13.4"><path d="M0 0 L6 6.7 L0 13.4 L1.8 6.7 Z" fill="#7a7b7e"/></svg>
<svg style="position:absolute;left:1907px;top:50.4px;" width="11" height="13.4" viewBox="0 0 11 13.4"><path d="M0 0 L6 6.7 L0 13.4 L1.8 6.7 Z" fill="#7a7b7e"/><path d="M5 0 L11 6.7 L5 13.4 L6.8 6.7 Z" fill="#7a7b7e"/></svg>
<div style="left:1600px;top:67px;width:319px;height:2px;background:#85868a;"></div>
<div style="left:1600px;top:89px;width:319px;height:945px;background:#7b7c80;"></div>
<div style="left:1600px;top:69.3px;width:319px;height:16px;background:linear-gradient(#47474a,#5a5a5d);border-top:1px solid #38383a;"></div>
<div style="left:1600px;top:70px;width:18px;height:15px;background:linear-gradient(#5c5c5f,#4e4e51);border-right:1px solid #3c3c3e;border-bottom:1px solid #404043;"></div>
<svg style="position:absolute;left:1604.5px;top:73.5px;" width="10" height="8" viewBox="0 0 10 8"><path d="M0 0 L3.4 4 L0 8 Z" fill="#7f8084"/><path d="M4.5 1h5M4.5 4h5M4.5 7h5" stroke="#7f8084" stroke-width="1.4"/></svg>
<div style="left:1618px;top:70px;width:76px;height:18px;background:linear-gradient(#86878b,#7b7c80 60%);border-top:1px solid #4a4a4d;"></div>
<div style="left:1628px;top:78px;width:12px;height:9px;background:#f0f0f0;border:1px solid #555;"></div>
<div style="left:1625px;top:76px;width:12px;height:9px;background:#e8e8e8;border:1px solid #777;"></div>
<div style="left:1622px;top:73px;width:13px;height:10px;background:#fff;border:2px solid #c81818;"></div>
<div class="t" style="left:1643.6px;top:72px;height:15px;line-height:15px;font-size:11px;color:#f0f0f0;"><span style="display:inline-block;transform:scaleX(0.7000);transform-origin:0 50%">ナビゲーター</span></div>
<div style="left:1600px;top:86px;width:319px;height:4px;background:#77787c;"></div>
<div style="left:1600px;top:90px;width:319px;height:207px;background:#434345;"></div>
<div style="left:1609.5px;top:90px;width:3.3px;height:207px;background:#9c2626;"></div>
<div style="left:1904.5px;top:90px;width:3.3px;height:207px;background:#9c2626;"></div>
<div style="left:1612.8px;top:90px;width:291.7px;height:207px;background:#ffffff;"></div>
<svg style="position:absolute;left:1600px;top:90px;" width="319" height="207" viewBox="0 0 319 207"><g fill="none" stroke="#a8a8ac" stroke-width="1"><rect x="34.5" y="27.5" width="102" height="153"/><path d="M180.5 27.5 H227.5 L233.5 63 L180.5 67.5Z"/><path d="M180.5 71.5 L282.5 63.5 V180.5 H180.5Z"/></g></svg>
<div style="left:1600px;top:90px;width:319px;height:1px;background:#77787c;"></div>
<svg style="position:absolute;left:1604px;top:305px;" width="164" height="12" viewBox="0 0 164 12"><rect x="0.5" y="0.5" width="163" height="11" fill="#7b7c80" stroke="#303033"/><path d="M1 11.5 L148 1 H163.5 V11.5Z" fill="#363639"/></svg>
<div style="left:1649px;top:301px;width:4px;height:20px;background:#8a8b8e;border:1px solid #5c5d60;"></div>
<svg style="position:absolute;left:1604px;top:325px;" width="164" height="12" viewBox="0 0 164 12"><rect x="0.5" y="0.5" width="163" height="11" fill="#7b7c80" stroke="#303033"/><path d="M1 1 L36 11 L62 11 C78 10 88 1 102 1 L129 1 C142 2 152 7 163 11 L1 11.5 Z" fill="#363639"/></svg>
<div style="left:1684px;top:321px;width:4px;height:20px;background:#8a8b8e;border:1px solid #5c5d60;"></div>
<div class="t" style="left:1789.5px;top:304px;height:14px;line-height:14px;font-size:12px;color:#f4f4f4;width:24px;text-align:right;"><span style="display:inline-block;transform:scaleX(0.8390);transform-origin:100% 50%">8.5</span></div>
<div class="t" style="left:1789.5px;top:324px;height:14px;line-height:14px;font-size:12px;color:#f4f4f4;width:24px;text-align:right;"><span style="display:inline-block;transform:scaleX(0.8390);transform-origin:100% 50%">0.0</span></div>
<svg style="position:absolute;left:1816px;top:303px;" width="17" height="17" viewBox="0 0 17 17"><circle cx="7" cy="7" r="5.6" fill="#f6f6f6" stroke="#1a1a1c" stroke-width="1.5"/><path d="M11 11 L15.5 15.5" stroke="#1a1a1c" stroke-width="2.2"/><path d="M4 7H10" stroke="#111" stroke-width="1.8"/></svg>
<svg style="position:absolute;left:1836px;top:303px;" width="17" height="17" viewBox="0 0 17 17"><circle cx="7" cy="7" r="5.6" fill="#f6f6f6" stroke="#1a1a1c" stroke-width="1.5"/><path d="M11 11 L15.5 15.5" stroke="#1a1a1c" stroke-width="2.2"/><path d="M4 7H10M7 4V10" stroke="#111" stroke-width="1.8"/></svg>
<div style="left:1856px;top:303px;width:16px;height:16px;background:#0a0a0a;"></div>
<div style="left:1859px;top:306px;width:10px;height:10px;border:1px solid #6e6e70;"></div>
<div style="left:1875px;top:303px;width:1px;height:16px;background:#66676a;"></div>
<div style="left:1875px;top:323px;width:1px;height:16px;background:#66676a;"></div>
<div style="left:1880px;top:304px;width:15px;height:14px;background:#0c0c0c;"></div>
<div style="left:1880px;top:304px;width:9px;height:7px;background:#f2f2f2;border:1px solid #111;"></div>
<svg style="position:absolute;left:1884px;top:307px;" width="11" height="10" viewBox="0 0 11 10"><path d="M1 1 L8 7 M8 2.5 V7.5 H3" stroke="#f4f4f4" stroke-width="1.8" fill="none"/></svg>
<div style="left:1900px;top:304px;width:16px;height:14px;background:#f4f4f4;border:1px solid #0a0a0a;"></div>
<svg style="position:absolute;left:1901px;top:305px;" width="14" height="12" viewBox="0 0 14 12"><path d="M2 1.5 L12 10.5" stroke="#0a0a0a" stroke-width="2.2"/><path d="M1 1 L6 1.5 L1.5 5Z M13 11 L8 10.5 L12.5 7Z" fill="#0a0a0a"/></svg>
<svg style="position:absolute;left:1815px;top:323px;" width="18" height="16" viewBox="0 0 18 16"><g transform="translate(9 0) scale(1 1) translate(-9 0)"><path d="M4.5 13 A6 6 0 1 1 14.5 13" fill="none" stroke="#141416" stroke-width="2.6"/><path d="M0 9 L8 9 L4 15.5Z" fill="#141416"/></g></svg>
<svg style="position:absolute;left:1835px;top:323px;" width="18" height="16" viewBox="0 0 18 16"><g transform="translate(9 0) scale(-1 1) translate(-9 0)"><path d="M4.5 13 A6 6 0 1 1 14.5 13" fill="none" stroke="#141416" stroke-width="2.6"/><path d="M0 9 L8 9 L4 15.5Z" fill="#141416"/></g></svg>
<svg style="position:absolute;left:1855px;top:322px;" width="18" height="18" viewBox="0 0 18 18"><circle cx="9" cy="9" r="5.6" fill="none" stroke="#4c4d50" stroke-width="2.6" stroke-dasharray="3 2.2"/></svg>
<svg style="position:absolute;left:1879px;top:322px;" width="18" height="18" viewBox="0 0 18 18"><path d="M2 8 A7 7 0 0 1 16 8" fill="none" stroke="#141416" stroke-width="2" stroke-dasharray="3 1.5"/><path d="M9 7V18" stroke="#141416" stroke-dasharray="2 1.5"/><path d="M1 10 L7 14 L1 18Z" fill="#f0f0f0" stroke="#222" stroke-width="0.6"/><path d="M17 10 L11 14 L17 18Z" fill="#141416"/></svg>
<svg style="position:absolute;left:1899px;top:322px;" width="19" height="18" viewBox="0 0 19 18"><path d="M16 3 A7 7 0 1 0 10 16" fill="none" stroke="#141416" stroke-width="2.4" stroke-dasharray="4 1.5"/><path d="M9 2H19M9 6H19" stroke="#141416" stroke-dasharray="2 1.5"/><path d="M10 11 L14 7 L18 11Z" fill="#141416"/><path d="M10 17 L14 13 L18 17Z" fill="#f2f2f2" stroke="#222" stroke-width="0.6"/></svg>
<div style="left:1600px;top:344.2px;width:319px;height:16px;background:linear-gradient(#47474a,#5a5a5d);border-top:1px solid #38383a;"></div>
<div style="left:1600px;top:345px;width:18px;height:15px;background:linear-gradient(#5c5c5f,#4e4e51);border-right:1px solid #3c3c3e;border-bottom:1px solid #404043;"></div>
<svg style="position:absolute;left:1604.5px;top:348.5px;" width="10" height="8" viewBox="0 0 10 8"><path d="M0 0 L3.4 4 L0 8 Z" fill="#7f8084"/><path d="M4.5 1h5M4.5 4h5M4.5 7h5" stroke="#7f8084" stroke-width="1.4"/></svg>
<div style="left:1618px;top:345px;width:61px;height:18px;background:linear-gradient(#86878b,#7b7c80 60%);border-top:1px solid #4a4a4d;"></div>
<svg style="position:absolute;left:1622px;top:347px;" width="17" height="15" viewBox="0 0 17 15"><g fill="#f2f2f2" stroke="#222" stroke-width="0.8"><path d="M8.5 9 L16 12 L8.5 15 L1 12Z"/><path d="M8.5 5.5 L16 8.5 L8.5 11.5 L1 8.5Z"/><path d="M8.5 2 L16 5 L8.5 8 L1 5Z"/><path d="M8.5 -1 L16 2 L8.5 5 L1 2Z"/></g></svg>
<div class="t" style="left:1644.0px;top:347px;height:15px;line-height:15px;font-size:11px;color:#f4f4f4;font-weight:bold;"><span style="display:inline-block;transform:scaleX(0.7000);transform-origin:0 50%">レイヤー</span></div>
<div style="left:1679px;top:346px;width:68px;height:14px;background:linear-gradient(#6d6e71,#636467);border:1px solid #3e3e41;border-bottom:none;"></div>
<div class="t" style="left:1705.3px;top:347px;height:14px;line-height:14px;font-size:11px;color:#909194;font-weight:bold;"><span style="display:inline-block;transform:scaleX(0.6818);transform-origin:0 50%">サブビュー</span></div>
<div style="left:1747px;top:346px;width:84px;height:14px;background:linear-gradient(#6d6e71,#636467);border:1px solid #3e3e41;border-bottom:none;"></div>
<div class="t" style="left:1773.3px;top:347px;height:14px;line-height:14px;font-size:11px;color:#909194;font-weight:bold;"><span style="display:inline-block;transform:scaleX(0.7091);transform-origin:0 50%">アイテムバンク</span></div>
<div style="left:1831px;top:346px;width:51px;height:14px;background:linear-gradient(#6d6e71,#636467);border:1px solid #3e3e41;border-bottom:none;"></div>
<div class="t" style="left:1857.5px;top:347px;height:14px;line-height:14px;font-size:11px;color:#909194;font-weight:bold;"><span style="display:inline-block;transform:scaleX(0.9545);transform-origin:0 50%">情報</span></div>
<div style="left:1686px;top:348px;width:14px;height:11px;background:#a8a9ac;border:1px solid #58595c;"></div>
<div style="left:1687px;top:354px;width:12px;height:4px;background:#707174;"></div>
<svg style="position:absolute;left:1754px;top:348px;" width="15" height="12" viewBox="0 0 15 12"><circle cx="7.5" cy="5" r="4.5" fill="#98999c"/><rect x="1" y="6" width="13" height="6" fill="#88898c" stroke="#58595c" stroke-width="0.8"/></svg>
<svg style="position:absolute;left:1838px;top:347px;" width="14" height="13" viewBox="0 0 14 13"><circle cx="7" cy="6.5" r="6.5" fill="#77787b"/><circle cx="7" cy="3.5" r="1.5" fill="#aaa"/><rect x="5.7" y="6" width="2.6" height="5" fill="#aaa"/></svg>
<div style="left:1600px;top:361px;width:319px;height:4px;background:#77787c;"></div>
<div style="left:1601px;top:367px;width:153px;height:18px;background:linear-gradient(#808185,#66676a);border:1px solid #4c4d50;border-radius:3px;box-shadow:inset 0 1px 0 #919296;"></div>
<div class="t" style="left:1658.4px;top:368px;height:15px;line-height:15px;font-size:12px;color:#f8f8f8;"><span style="display:inline-block;transform:scaleX(1.0000);transform-origin:0 50%">通常</span></div>
<svg style="position:absolute;left:1742px;top:373px;" width="9" height="5" viewBox="0 0 9 5"><path d="M0 0 L9 0 L4.5 5 Z" fill="#3f4043"/></svg>
<div style="left:1761px;top:371px;width:112px;height:8px;background:linear-gradient(90deg,rgba(250,250,250,1),rgba(250,250,250,0.1)),conic-gradient(#c8c8c8 25%,#8a8b8e 0 50%,#c8c8c8 0 75%,#8a8b8e 0) 0 0/8px 8px;border:1px solid #58595c;"></div>
<div style="left:1873px;top:366px;width:3px;height:19px;background:#6e6f72;border:1px solid #505154;"></div>
<div class="t" style="left:1880.5px;top:368px;height:14px;line-height:14px;font-size:12px;color:#f4f4f4;"><span style="display:inline-block;transform:scaleX(0.8637);transform-origin:0 50%">100</span></div>
<svg style="position:absolute;left:1901px;top:369px;" width="9" height="13" viewBox="0 0 9 13"><path d="M0 5 L4.5 0 L9 5Z M0 8 L9 8 L4.5 13Z" fill="#2a2a2c"/></svg>
<div style="left:1600px;top:387px;width:38px;height:18px;background:linear-gradient(#77787c,#636467);border:1px solid #4c4d50;border-radius:3px;"></div>
<div style="left:1602px;top:389px;width:18px;height:14px;background:#707174;border:1px solid #1e1e20;"></div>
<svg style="position:absolute;left:1625px;top:394px;" width="9" height="5" viewBox="0 0 9 5"><path d="M0 0 L9 0 L4.5 5 Z" fill="#3f4043"/></svg>
<svg style="position:absolute;left:1704px;top:390px;" width="17" height="13" viewBox="0 0 17 13"><ellipse cx="8.5" cy="5" rx="7.5" ry="3.8" fill="#e0e0e0" stroke="#111" stroke-width="1.3"/><path d="M1 5 V8.5 C1 13 16 13 16 8.5 V5" fill="#1a1a1c"/></svg>
<svg style="position:absolute;left:1724px;top:388px;" width="15" height="17" viewBox="0 0 15 17"><path d="M5.5 4 H9.5 L10.5 16 H4.5Z" fill="#f0f0f0" stroke="#222" stroke-width="0.9"/><rect x="5" y="2" width="5" height="3" fill="#222"/><path d="M0 3 L4 4.5 M15 3 L11 4.5 M0 8 L4 7 M15 8 L11 7" stroke="#a8a9ac"/><rect x="5.5" y="9" width="4" height="2" fill="#222"/></svg>
<svg style="position:absolute;left:1746px;top:387px;" width="10" height="19" viewBox="0 0 10 19"><path d="M1 2 H9 V11 L5 18 L1 11Z" fill="#20a0d8" stroke="#0c5c80" stroke-width="0.8"/><path d="M1 11 H9 L5 18Z" fill="#f0d020"/><path d="M4 15.5 L5 18 L6 15.5Z" fill="#222"/><path d="M1 2 H9" stroke="#10506c" stroke-width="2"/></svg>
<svg style="position:absolute;left:1763px;top:388px;" width="17" height="17" viewBox="0 0 17 17"><path d="M4.5 8 V5 C4.5 0.5 12.5 0.5 12.5 5 V8" fill="none" stroke="#141416" stroke-width="1.8"/><rect x="1.8" y="8" width="13.4" height="8.4" fill="#88898c" stroke="#141416" stroke-width="1.5"/><rect x="7.5" y="10.5" width="2" height="3.5" fill="#141416"/></svg>
<svg style="position:absolute;left:1781px;top:388px;" width="20" height="17" viewBox="0 0 20 17"><path d="M2.5 5 V3.5 C2.5 0.5 7.5 0.5 7.5 3.5 V5" fill="none" stroke="#141416" stroke-width="1.4"/><rect x="0.7" y="5" width="8.6" height="6.5" fill="#d8d8d8" stroke="#141416" stroke-width="1.2"/><rect x="9.5" y="8.5" width="9" height="8" fill="#909194" stroke="#e8e8e8" stroke-width="0.8"/><rect x="11" y="12" width="6" height="3" fill="#555"/></svg>
<div style="left:1803px;top:387px;width:34px;height:18px;background:linear-gradient(#77787c,#636467);border:1px solid #4c4d50;border-radius:3px;"></div>
<svg style="position:absolute;left:1825px;top:394px;" width="9" height="5" viewBox="0 0 9 5"><path d="M0 0 L9 0 L4.5 5 Z" fill="#505154"/></svg>
<div style="left:1840px;top:387px;width:34px;height:18px;background:linear-gradient(#77787c,#636467);border:1px solid #4c4d50;border-radius:3px;"></div>
<svg style="position:absolute;left:1862px;top:394px;" width="9" height="5" viewBox="0 0 9 5"><path d="M0 0 L9 0 L4.5 5 Z" fill="#505154"/></svg>
<div style="left:1877px;top:387px;width:34px;height:18px;background:linear-gradient(#77787c,#636467);border:1px solid #4c4d50;border-radius:3px;"></div>
<svg style="position:absolute;left:1899px;top:394px;" width="9" height="5" viewBox="0 0 9 5"><path d="M0 0 L9 0 L4.5 5 Z" fill="#2e2e30"/></svg>
<svg style="position:absolute;left:1807px;top:389px;" width="17" height="15" viewBox="0 0 17 15"><path d="M1 3 H9 L12 8 L8 12 H1Z" fill="#8c8d90" stroke="#66676a"/><path d="M9 9 L15 15 M15 9 L9 15" stroke="#505154" stroke-width="1.8"/></svg>
<svg style="position:absolute;left:1843px;top:389px;" width="17" height="15" viewBox="0 0 17 15"><path d="M1 1 H13 L3 13 H1Z" fill="none" stroke="#58595c" stroke-width="1.4"/><path d="M9 9 L15 15 M15 9 L9 15" stroke="#505154" stroke-width="1.8"/></svg>
<div style="left:1885px;top:394px;width:10px;height:9px;background:#fff;"></div>
<div style="left:1881px;top:390px;width:10px;height:9px;background:#3890f0;border:1px solid #2870c8;"></div>
<svg style="position:absolute;left:1602px;top:413px;" width="17" height="15" viewBox="0 0 17 15"><g fill="#f2f2f2" stroke="#222" stroke-width="0.8"><path d="M8.5 9 L16 12 L8.5 15 L1 12Z"/><path d="M8.5 6 L16 9 L8.5 12 L1 9Z"/><path d="M8.5 3 L16 6 L8.5 9 L1 6Z"/><path d="M8.5 0 L16 3 L8.5 6 L1 3Z"/></g></svg>
<svg style="position:absolute;left:1754px;top:411px;" width="16" height="18" viewBox="0 0 16 18"><path d="M1.5 1.5 h13 v11 l-4 4 h-9Z" fill="#fafafa" stroke="#2a2a2c" stroke-width="1"/><path d="M14.5 12.5 h-4 v4" fill="#bbb" stroke="#2a2a2c" stroke-width="0.7"/></svg>
<svg style="position:absolute;left:1773px;top:411px;" width="19" height="18" viewBox="0 0 19 18"><path d="M1.5 1.5 h13 v11 l-4 4 h-9Z" fill="#fafafa" stroke="#2a2a2c" stroke-width="1"/><path d="M14.5 12.5 h-4 v4" fill="#bbb" stroke="#2a2a2c" stroke-width="0.7"/><path d="M9 10 l3 -2 h4 v6 l-3 2 h-4Z" fill="#bbb" stroke="#333" stroke-width="0.8"/></svg>
<svg style="position:absolute;left:1793px;top:411px;" width="19" height="18" viewBox="0 0 19 18"><path d="M1 5 H5 L6 6.5 H10 V15 H1Z" fill="#c8c8c8" stroke="#333" stroke-width="0.8"/><path d="M8.5 4.5 h9 v8 l-4 4 h-5Z" fill="#fafafa" stroke="#2a2a2c" stroke-width="1"/><path d="M17.5 12.5 h-4 v4" fill="#bbb" stroke="#2a2a2c" stroke-width="0.7"/></svg>
<svg style="position:absolute;left:1814px;top:411px;" width="18" height="18" viewBox="0 0 18 18"><path d="M9 1 V9 M5 6 L9 10.5 L13 6" stroke="#fff" stroke-width="3.4" fill="none"/><path d="M9 1 V9 M5.5 6 L9 10 L12.5 6" stroke="#141416" stroke-width="1.8" fill="none"/><path d="M1 11.5 L9 15.5 L17 11.5 L17 13.5 L9 17.5 L1 13.5Z" fill="#141416"/><path d="M1 9.5 L5 7.5 M17 9.5 L13 7.5 M1 9.5 L9 13.5 L17 9.5" stroke="#f4f4f4" stroke-width="1.6" fill="none"/></svg>
<svg style="position:absolute;left:1833px;top:411px;" width="18" height="18" viewBox="0 0 18 18"><path d="M9 1 V9 M5 6 L9 10.5 L13 6" stroke="#fff" stroke-width="3.4" fill="none"/><path d="M9 1 V9 M5.5 6 L9 10 L12.5 6" stroke="#141416" stroke-width="1.8" fill="none"/><path d="M1 11.5 L9 15.5 L17 11.5 L17 13.5 L9 17.5 L1 13.5Z" fill="#141416"/><path d="M1 9.5 L5 7.5 M17 9.5 L13 7.5 M1 9.5 L9 13.5 L17 9.5" stroke="#f4f4f4" stroke-width="1.6" fill="none"/></svg>
<div style="left:1854px;top:414px;width:17px;height:12px;background:#2a2a2c;border:1px solid #111;"></div>
<div style="left:1859px;top:417px;width:7px;height:6px;background:#f4f4f4;border-radius:3px;"></div>
<svg style="position:absolute;left:1873px;top:411px;" width="18" height="18" viewBox="0 0 18 18"><path d="M3 2V17" stroke="#58595c" stroke-width="1.6"/><path d="M5 3 L16 7 L5 11Z" fill="#66676a"/><path d="M6 12 L16 10 L12 16Z" fill="#5a5b5e"/></svg>
<svg style="position:absolute;left:1893px;top:411px;" width="16" height="18" viewBox="0 0 16 18"><path d="M1.5 6 H14.5 L13 17 H3Z" fill="#f2f2f2" stroke="#2a2a2c" stroke-width="1.1"/><ellipse cx="8" cy="5.5" rx="7" ry="2" fill="#f2f2f2" stroke="#2a2a2c" stroke-width="1"/><path d="M4 4.5 C4 0.5 12 0.5 12 4.5" fill="none" stroke="#2a2a2c" stroke-width="1.2"/><path d="M5.5 9V15M8 9V15M10.5 9V15" stroke="#2a2a2c" stroke-width="0.8"/></svg>
<div style="left:1600px;top:431.5px;width:312px;height:601.5px;background:#7b7c80;border:1px solid #38393c;border-top:1.5px solid #38393c;border-left:none;border-bottom-color:#606164;"></div>
<div style="left:1603.4px;top:433px;width:1px;height:599px;background:#38393c;"></div>
<div style="left:1900px;top:434px;width:11px;height:595px;background:#68696c;border-left:1px solid #5a5b5e;"></div>
<div style="left:1604px;top:433px;width:1px;height:165px;background:#515255;"></div>
<div style="left:1623px;top:433px;width:1px;height:165px;background:#515255;"></div>
<div style="left:1641px;top:433px;width:1px;height:165px;background:#515255;"></div>
<div style="left:1642px;top:433px;width:257px;height:32px;background:linear-gradient(#809eae,#64808f);"></div>
<div style="left:1604px;top:465px;width:295px;height:1px;background:#4a4b4e;"></div>
<svg style="position:absolute;left:1607px;top:443px;" width="14" height="12" viewBox="0 0 14 12"><path d="M0 6 C3 1 11 1 14 6 C11 10.5 3 10.5 0 6Z" fill="#f4f4f4" stroke="#222" stroke-width="0.8"/><circle cx="7" cy="5.5" r="3.1" fill="#161618"/><circle cx="6" cy="4.5" r="0.9" fill="#aaa"/><path d="M0.5 5 C3 0.5 11 0.5 13.5 5" fill="none" stroke="#111" stroke-width="1.6"/></svg>
<div style="left:1604px;top:498px;width:295px;height:1px;background:#4a4b4e;"></div>
<svg style="position:absolute;left:1607px;top:476px;" width="14" height="12" viewBox="0 0 14 12"><path d="M0 6 C3 1 11 1 14 6 C11 10.5 3 10.5 0 6Z" fill="#f4f4f4" stroke="#222" stroke-width="0.8"/><circle cx="7" cy="5.5" r="3.1" fill="#161618"/><circle cx="6" cy="4.5" r="0.9" fill="#aaa"/><path d="M0.5 5 C3 0.5 11 0.5 13.5 5" fill="none" stroke="#111" stroke-width="1.6"/></svg>
<div style="left:1604px;top:531px;width:295px;height:1px;background:#4a4b4e;"></div>
<svg style="position:absolute;left:1607px;top:509px;" width="14" height="12" viewBox="0 0 14 12"><path d="M0 6 C3 1 11 1 14 6 C11 10.5 3 10.5 0 6Z" fill="#f4f4f4" stroke="#222" stroke-width="0.8"/><circle cx="7" cy="5.5" r="3.1" fill="#161618"/><circle cx="6" cy="4.5" r="0.9" fill="#aaa"/><path d="M0.5 5 C3 0.5 11 0.5 13.5 5" fill="none" stroke="#111" stroke-width="1.6"/></svg>
<div style="left:1604px;top:564px;width:295px;height:1px;background:#4a4b4e;"></div>
<svg style="position:absolute;left:1607px;top:542px;" width="14" height="12" viewBox="0 0 14 12"><path d="M0 6 C3 1 11 1 14 6 C11 10.5 3 10.5 0 6Z" fill="#f4f4f4" stroke="#222" stroke-width="0.8"/><circle cx="7" cy="5.5" r="3.1" fill="#161618"/><circle cx="6" cy="4.5" r="0.9" fill="#aaa"/><path d="M0.5 5 C3 0.5 11 0.5 13.5 5" fill="none" stroke="#111" stroke-width="1.6"/></svg>
<div style="left:1604px;top:597px;width:295px;height:1px;background:#4a4b4e;"></div>
<svg style="position:absolute;left:1607px;top:575px;" width="14" height="12" viewBox="0 0 14 12"><path d="M0 6 C3 1 11 1 14 6 C11 10.5 3 10.5 0 6Z" fill="#f4f4f4" stroke="#222" stroke-width="0.8"/><circle cx="7" cy="5.5" r="3.1" fill="#161618"/><circle cx="6" cy="4.5" r="0.9" fill="#aaa"/><path d="M0.5 5 C3 0.5 11 0.5 13.5 5" fill="none" stroke="#111" stroke-width="1.6"/></svg>
<svg style="position:absolute;left:1625px;top:441px;" width="14" height="14" viewBox="0 0 14 14"><path d="M0 13.5 L2.5 9.5 L11.5 0.5 L13.5 2.5 L4.5 11.5Z" fill="#1a1a1c"/><path d="M0 13.5 L2.5 9.5 L5 11.5Z" fill="#e8e8e8" stroke="#222" stroke-width="0.5"/><path d="M8 3 L11.5 0.5 L12.5 1.5" stroke="#f2f2f2" fill="none"/></svg>
<div style="left:1646px;top:434px;width:38px;height:29px;border:1px solid #0a0a0a;"></div>
<div style="left:1648px;top:436px;width:34px;height:25px;background:conic-gradient(#fff 25%,#d2d2d2 0 50%,#fff 0 75%,#d2d2d2 0) 0 0/16px 16px;border:1px solid #1a1a1c;"></div>
<div class="t" style="left:1686.0px;top:434px;height:14px;line-height:14px;font-size:12px;color:#f6f6f6;"><span style="display:inline-block;transform:scaleX(0.9047);transform-origin:0 50%">100 %通常</span></div>
<div class="t" style="left:1683.9px;top:448px;height:15px;line-height:15px;font-size:12px;color:#f6f6f6;"><span style="display:inline-block;transform:scaleX(0.8290);transform-origin:0 50%">コマ 1</span></div>
<div style="left:1648px;top:469px;width:34px;height:25px;background:conic-gradient(#fff 25%,#d2d2d2 0 50%,#fff 0 75%,#d2d2d2 0) 0 0/16px 16px;border:1px solid #1a1a1c;"></div>
<div class="t" style="left:1686.0px;top:467px;height:14px;line-height:14px;font-size:12px;color:#f6f6f6;"><span style="display:inline-block;transform:scaleX(0.9047);transform-origin:0 50%">100 %通常</span></div>
<div class="t" style="left:1686.0px;top:481px;height:15px;line-height:15px;font-size:12px;color:#f6f6f6;"><span style="display:inline-block;transform:scaleX(0.8101);transform-origin:0 50%">レイヤー 2</span></div>
<div style="left:1648px;top:535px;width:34px;height:25px;background:conic-gradient(#fff 25%,#d2d2d2 0 50%,#fff 0 75%,#d2d2d2 0) 0 0/16px 16px;border:1px solid #1a1a1c;"></div>
<div class="t" style="left:1686.0px;top:533px;height:14px;line-height:14px;font-size:12px;color:#f6f6f6;"><span style="display:inline-block;transform:scaleX(0.9047);transform-origin:0 50%">100 %通常</span></div>
<div class="t" style="left:1686.0px;top:547px;height:15px;line-height:15px;font-size:12px;color:#f6f6f6;"><span style="display:inline-block;transform:scaleX(0.8101);transform-origin:0 50%">レイヤー 1</span></div>
<svg style="position:absolute;left:1645px;top:514px;" width="9" height="5" viewBox="0 0 9 5"><path d="M0 0 L9 0 L4.5 5Z" fill="#f4f4f4"/></svg>
<svg style="position:absolute;left:1661px;top:508px;" width="16" height="12" viewBox="0 0 16 12"><path d="M0.5 1 H5 L6 2.5 H12 V5 H3.5 L0.5 11Z" fill="#f0e8a8" stroke="#222" stroke-width="0.8"/><path d="M3.5 5 H15.5 L12 11 H0.5Z" fill="#faf4c0" stroke="#222" stroke-width="0.8"/></svg>
<svg style="position:absolute;left:1682px;top:509px;" width="9" height="9" viewBox="0 0 9 9"><path d="M0.5 5 L3 8 L8.5 0.5" fill="none" stroke="#0c0c0e" stroke-width="1.5"/></svg>
<svg style="position:absolute;left:1731px;top:509px;" width="9" height="9" viewBox="0 0 9 9"><path d="M0.5 5 L3 8 L8.5 0.5" fill="none" stroke="#0c0c0e" stroke-width="1.5"/></svg>
<div style="left:1693px;top:501px;width:35px;height:26px;background:#000;"></div>
<div style="left:1697px;top:505px;width:11px;height:18px;background:#fff;"></div>
<svg style="position:absolute;left:1711px;top:505px;" width="13" height="18" viewBox="0 0 13 18"><path d="M0 0 H7 L8 5 L0 5.6Z M0 7 L12 6 V18 H0Z" fill="#fff"/></svg>
<div style="left:1744px;top:505px;width:14px;height:15px;background:#58a8e8;border:1px solid #111;"></div>
<div style="left:1748px;top:511px;width:10px;height:10px;background:#f4f4f4;border:1px solid #555;"></div>
<svg style="position:absolute;left:1746px;top:507px;" width="14" height="14" viewBox="0 0 14 14"><path d="M1 1 L13 13 M13 1 L1 13" stroke="#e01010" stroke-width="2"/></svg>
<div class="t" style="left:1765.7px;top:500px;height:14px;line-height:14px;font-size:12px;color:#f6f6f6;"><span style="display:inline-block;transform:scaleX(0.9133);transform-origin:0 50%">100 %通常</span></div>
<div class="t" style="left:1764.1px;top:514px;height:15px;line-height:15px;font-size:12px;color:#f6f6f6;"><span style="display:inline-block;transform:scaleX(0.8232);transform-origin:0 50%">コマ 1</span></div>
<div style="left:1648px;top:568px;width:34px;height:25px;background:#fff;border:1px solid #1a1a1c;"></div>
<div style="left:1688px;top:566px;width:20px;height:20px;background:#fafafa;border:1.5px solid #0a0a0a;"></div>
<svg style="position:absolute;left:1692px;top:569px;" width="12" height="14" viewBox="0 0 12 14"><path d="M0.5 0.5 H7.5 L11.5 4.5 V13.5 H0.5Z" fill="#fff" stroke="#111"/><path d="M7.5 0.5 V4.5 H11.5" fill="none" stroke="#111"/></svg>
<div class="t" style="left:1709.0px;top:579px;height:15px;line-height:15px;font-size:12px;color:#f6f6f6;"><span style="display:inline-block;transform:scaleX(1.0417);transform-origin:0 50%">用紙</span></div>
<div style="left:1912px;top:344px;width:1px;height:690px;background:#3e3f42;"></div>
<div style="left:1913px;top:344px;width:1px;height:690px;background:#6e6f72;"></div>
<div style="left:1914px;top:344px;width:1px;height:690px;background:#3e3f42;"></div>
<div style="left:1915px;top:344px;width:1px;height:690px;background:#6e6f72;"></div>
<div style="left:1916px;top:344px;width:1px;height:690px;background:#3e3f42;"></div>
<div style="left:1917px;top:344px;width:1px;height:690px;background:#6e6f72;"></div>
<div style="left:322px;top:46px;width:269px;height:491px;background:#7b7c80;border:1px solid #3c3c3f;box-shadow:2px 2px 3px rgba(0,0,0,0.38);"></div>
<div style="left:357px;top:48px;width:1px;height:487px;background:#898a8e;"></div>
<div class="t" style="left:485.5px;top:49px;height:16px;line-height:16px;font-size:12px;color:#f6f6f6;"><span style="display:inline-block;transform:scaleX(0.9792);transform-origin:0 50%">Ctrl+Shift+N</span></div>
<div class="t" style="left:363.0px;top:49px;height:16px;line-height:16px;font-size:12px;color:#f6f6f6;"><span style="display:inline-block;transform:scaleX(0.8524);transform-origin:0 50%">新規ラスターレイヤー(N)</span></div>
<div class="t" style="left:363.0px;top:69px;height:16px;line-height:16px;font-size:12px;color:#f6f6f6;"><span style="display:inline-block;transform:scaleX(0.8943);transform-origin:0 50%">新規レイヤー(E)</span></div>
<svg style="position:absolute;left:577px;top:74.9px;" width="5.4" height="9.4" viewBox="0 0 5.4 9.4"><path d="M0 0 L5.4 4.7 L0 9.4 Z" fill="#f2f2f2"/></svg>
<div class="t" style="left:363.0px;top:89px;height:16px;line-height:16px;font-size:12px;color:#f6f6f6;"><span style="display:inline-block;transform:scaleX(0.9530);transform-origin:0 50%">新規色調補正レイヤー(J)</span></div>
<svg style="position:absolute;left:577px;top:94.9px;" width="5.4" height="9.4" viewBox="0 0 5.4 9.4"><path d="M0 0 L5.4 4.7 L0 9.4 Z" fill="#f2f2f2"/></svg>
<div class="t" style="left:363.0px;top:109px;height:16px;line-height:16px;font-size:12px;color:#f6f6f6;"><span style="display:inline-block;transform:scaleX(0.8438);transform-origin:0 50%">新規レイヤーフォルダー(O)</span></div>
<div class="t" style="left:363.0px;top:129px;height:16px;line-height:16px;font-size:12px;color:#f6f6f6;"><span style="display:inline-block;transform:scaleX(0.8791);transform-origin:0 50%">レイヤーを複製(D)</span></div>
<div class="t" style="left:363.0px;top:149px;height:16px;line-height:16px;font-size:12px;color:#f6f6f6;"><span style="display:inline-block;transform:scaleX(0.8809);transform-origin:0 50%">レイヤーを削除(T)</span></div>
<div class="t" style="left:363.0px;top:177px;height:16px;line-height:16px;font-size:12px;color:#f6f6f6;"><span style="display:inline-block;transform:scaleX(0.8137);transform-origin:0 50%">レイヤーマスク(M)</span></div>
<svg style="position:absolute;left:577px;top:182.9px;" width="5.4" height="9.4" viewBox="0 0 5.4 9.4"><path d="M0 0 L5.4 4.7 L0 9.4 Z" fill="#f2f2f2"/></svg>
<div class="t" style="left:363.0px;top:197px;height:16px;line-height:16px;font-size:12px;color:#f6f6f6;"><span style="display:inline-block;transform:scaleX(0.8796);transform-origin:0 50%">定規・コマ枠(R)</span></div>
<svg style="position:absolute;left:577px;top:202.9px;" width="5.4" height="9.4" viewBox="0 0 5.4 9.4"><path d="M0 0 L5.4 4.7 L0 9.4 Z" fill="#f2f2f2"/></svg>
<div class="t" style="left:363.0px;top:217px;height:16px;line-height:16px;font-size:12px;color:#f6f6f6;"><span style="display:inline-block;transform:scaleX(0.7647);transform-origin:0 50%">ファイルオブジェクト(X)</span></div>
<svg style="position:absolute;left:577px;top:222.9px;" width="5.4" height="9.4" viewBox="0 0 5.4 9.4"><path d="M0 0 L5.4 4.7 L0 9.4 Z" fill="#f2f2f2"/></svg>
<div class="t" style="left:363.0px;top:237px;height:16px;line-height:16px;font-size:12px;color:#f6f6f6;"><span style="display:inline-block;transform:scaleX(0.8864);transform-origin:0 50%">レイヤー設定(P)</span></div>
<svg style="position:absolute;left:577px;top:242.9px;" width="5.4" height="9.4" viewBox="0 0 5.4 9.4"><path d="M0 0 L5.4 4.7 L0 9.4 Z" fill="#f2f2f2"/></svg>
<div class="t" style="left:363.0px;top:257px;height:16px;line-height:16px;font-size:12px;color:#f6f6f6;"><span style="display:inline-block;transform:scaleX(0.8934);transform-origin:0 50%">レイヤーから選択範囲(Y)</span></div>
<svg style="position:absolute;left:577px;top:262.9px;" width="5.4" height="9.4" viewBox="0 0 5.4 9.4"><path d="M0 0 L5.4 4.7 L0 9.4 Z" fill="#f2f2f2"/></svg>
<div class="t" style="left:363.0px;top:277px;height:16px;line-height:16px;font-size:12px;color:#a2a3a7;"><span style="display:inline-block;transform:scaleX(0.7936);transform-origin:0 50%">ラスタライズ(Z)</span></div>
<div class="t" style="left:363.0px;top:297px;height:16px;line-height:16px;font-size:12px;color:#f6f6f6;"><span style="display:inline-block;transform:scaleX(0.8526);transform-origin:0 50%">フォルダーを作成してレイヤーを挿入(F)</span></div>
<div class="t" style="left:363.0px;top:317px;height:16px;line-height:16px;font-size:12px;color:#f6f6f6;"><span style="display:inline-block;transform:scaleX(0.8674);transform-origin:0 50%">レイヤーの変換(H)...</span></div>
<div class="t" style="left:363.0px;top:337px;height:16px;line-height:16px;font-size:12px;color:#f6f6f6;"><span style="display:inline-block;transform:scaleX(0.8681);transform-origin:0 50%">レイヤーのLT変換...</span></div>
<div class="t" style="left:363.0px;top:365px;height:16px;line-height:16px;font-size:12px;color:#f6f6f6;"><span style="display:inline-block;transform:scaleX(0.8943);transform-origin:0 50%">下のレイヤーに転写(C)</span></div>
<div class="t" style="left:363.0px;top:385px;height:16px;line-height:16px;font-size:12px;color:#f6f6f6;"><span style="display:inline-block;transform:scaleX(0.8718);transform-origin:0 50%">下のレイヤーと結合(W)</span></div>
<div class="t" style="left:363.0px;top:405px;height:16px;line-height:16px;font-size:12px;color:#a2a3a7;"><span style="display:inline-block;transform:scaleX(0.9107);transform-origin:0 50%">選択中のレイヤーを結合(G)</span></div>
<div class="t" style="left:363.0px;top:425px;height:16px;line-height:16px;font-size:12px;color:#f6f6f6;"><span style="display:inline-block;transform:scaleX(0.9194);transform-origin:0 50%">表示レイヤーを結合(V)</span></div>
<div class="t" style="left:363.0px;top:445px;height:16px;line-height:16px;font-size:12px;color:#f6f6f6;"><span style="display:inline-block;transform:scaleX(0.8779);transform-origin:0 50%">表示レイヤーのコピーを結合(X)</span></div>
<div class="t" style="left:363.0px;top:465px;height:16px;line-height:16px;font-size:12px;color:#f6f6f6;"><span style="display:inline-block;transform:scaleX(0.9930);transform-origin:0 50%">画像を統合(F)</span></div>
<div class="t" style="left:363.0px;top:493px;height:16px;line-height:16px;font-size:12px;color:#f6f6f6;"><span style="display:inline-block;transform:scaleX(0.9531);transform-origin:0 50%">並べ替え(A)</span></div>
<svg style="position:absolute;left:577px;top:498.9px;" width="5.4" height="9.4" viewBox="0 0 5.4 9.4"><path d="M0 0 L5.4 4.7 L0 9.4 Z" fill="#f2f2f2"/></svg>
<div class="t" style="left:363.0px;top:513px;height:16px;line-height:16px;font-size:12px;color:#f6f6f6;"><span style="display:inline-block;transform:scaleX(0.9494);transform-origin:0 50%">編集対象にする(I)</span></div>
<svg style="position:absolute;left:577px;top:518.9px;" width="5.4" height="9.4" viewBox="0 0 5.4 9.4"><path d="M0 0 L5.4 4.7 L0 9.4 Z" fill="#f2f2f2"/></svg>
<div style="left:363px;top:173px;width:223px;height:1px;background:#5c5d60;"></div>
<div style="left:363px;top:174px;width:224px;height:1px;background:#8e8f93;"></div>
<div style="left:363px;top:361px;width:223px;height:1px;background:#5c5d60;"></div>
<div style="left:363px;top:362px;width:224px;height:1px;background:#8e8f93;"></div>
<div style="left:363px;top:489px;width:223px;height:1px;background:#5c5d60;"></div>
<div style="left:363px;top:490px;width:224px;height:1px;background:#8e8f93;"></div>
<div style="left:0px;top:1034px;width:1919px;height:1px;background:#3c3c3e;"></div>
<div style="left:0px;top:1035px;width:1919px;height:10px;background:#d6d3ce;border-top:3px solid #fdfdfd;"></div>
<div style="left:0px;top:1039px;width:62px;height:6px;background:#e2e0db;border:1px solid #fafaf8;border-bottom:none;border-left:none;"></div>
<div style="left:62px;top:1038px;width:1px;height:7px;background:#6a6a68;"></div>
<div style="left:181px;top:1041px;width:29px;height:4px;background:#fbfbfb;"></div>
<div style="left:235px;top:1042px;width:16px;height:3px;background:#b4b8c2;border-radius:8px 8px 0 0;"></div>
<div style="left:287px;top:1042px;width:2px;height:3px;background:#222;"></div>
<div style="left:299px;top:1042px;width:2px;height:3px;background:#222;"></div>
<div style="left:309px;top:1042px;width:2px;height:3px;background:#222;"></div>
<div style="left:337px;top:1042px;width:16px;height:3px;background:#d04040;border-radius:8px 8px 0 0;"></div>
<div style="left:372px;top:1038px;width:47px;height:7px;background:#dcd9d4;border:1px solid #f8f7f4;border-right-color:#6a6a68;border-bottom:none;"></div>
<div style="left:422px;top:1038px;width:47px;height:7px;background:#dcd9d4;border:1px solid #f8f7f4;border-right-color:#6a6a68;border-bottom:none;"></div>
<div style="left:472px;top:1038px;width:47px;height:7px;background:#dcd9d4;border:1px solid #f8f7f4;border-right-color:#6a6a68;border-bottom:none;"></div>
<div style="left:522px;top:1038px;width:47px;height:7px;background:#dcd9d4;border:1px solid #f8f7f4;border-right-color:#6a6a68;border-bottom:none;"></div>
<div style="left:572px;top:1038px;width:47px;height:7px;background:#dcd9d4;border:1px solid #f8f7f4;border-right-color:#6a6a68;border-bottom:none;"></div>
<div style="left:399px;top:1042px;width:4px;height:3px;background:#9a9a9a;"></div>
<div style="left:429px;top:1041px;width:33px;height:4px;background:#1a1a1a;"></div>
<div style="left:479px;top:1041px;width:32px;height:4px;background:#f8f8f8;"></div>
<div style="left:542px;top:1041px;width:15px;height:4px;background:#e8c448;border-radius:7px 7px 0 0;"></div>
<div style="left:580px;top:1042px;width:6px;height:3px;background:#3a6ab0;"></div>
<div style="left:600px;top:1042px;width:6px;height:3px;background:#3a6ab0;"></div>
<div style="left:622px;top:1038px;width:47px;height:7px;background:#f4f3f0;border:1px solid #5a5a58;border-bottom:none;"></div>
<div style="left:630px;top:1041px;width:30px;height:4px;background:#fdfdfd;border:1px solid #c8c8c8;border-bottom:none;"></div>
<div style="left:1547px;top:1041px;width:32px;height:4px;background:#000;"></div>
<div style="left:1580px;top:1039px;width:339px;height:6px;background:#e4e2de;border-top:1px solid #6e6e6c;border-left:1px solid #6e6e6c;"></div>
<div style="left:1835px;top:1033px;width:84px;height:2px;background:#78b4e0;"></div>
</body></html>
